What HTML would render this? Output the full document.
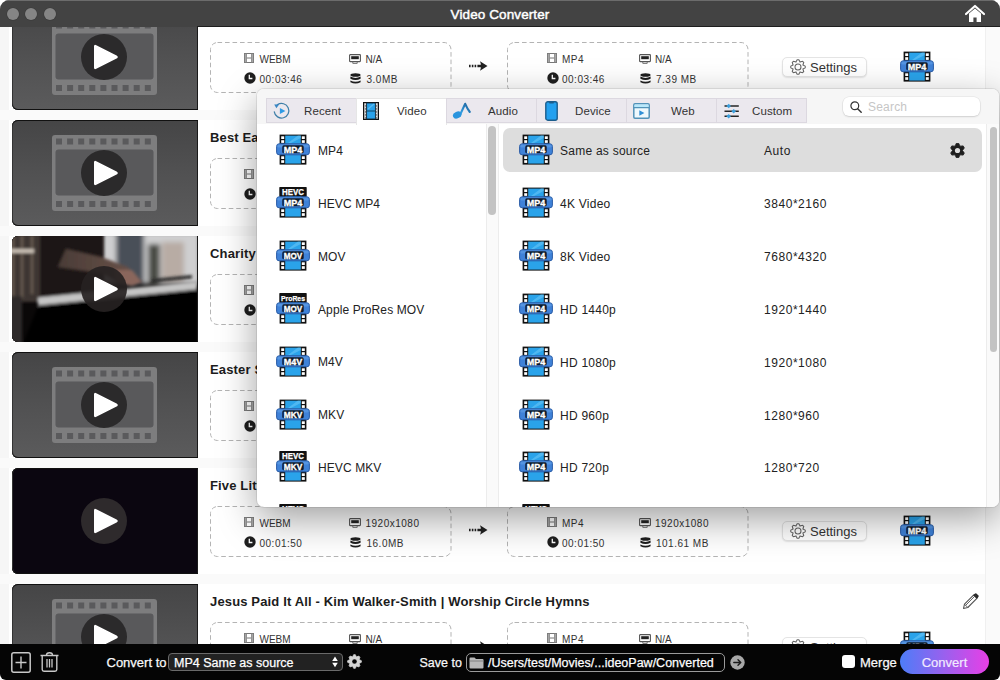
<!DOCTYPE html>
<html><head><meta charset="utf-8">
<style>
*{box-sizing:border-box;margin:0;padding:0}
html,body{width:1000px;height:680px;overflow:hidden;background:#fff;font-family:"Liberation Sans",sans-serif}
.win{position:absolute;left:0;top:0;width:1000px;height:680px;border-radius:9px 9px 6px 6px;overflow:hidden;background:#fff}
.tx{position:absolute;white-space:nowrap;line-height:1.16;font-family:"Liberation Sans",sans-serif}
.title{position:absolute;left:0;top:0;width:1000px;height:27px;background:#434343;box-shadow:inset 0 1px 0 #6c6c6c;z-index:5}
.dot{position:absolute;top:7.5px;width:12px;height:12px;border-radius:50%;background:#858585;box-shadow:0 0 0 0.6px #3a3a3a}
.list{position:absolute;left:0;top:0;width:1000px;height:680px;overflow:hidden}
.sep{position:absolute;left:0;width:1000px;height:10px;background:#fafafa}
.thumb{position:absolute;left:12px;width:185.5px;height:106px;border-radius:6px 0 0 6px;overflow:hidden;box-shadow:inset 0 1px 0 #111,inset 0 -1px 0 #111,inset -1px 0 0 #1a1a1a,inset 1px 0 0 #333}
.box{position:absolute;height:51px;border:1px dashed #a9a9a9;border-radius:7px}
.btn{position:absolute;left:782px;width:85px;height:20px;border-radius:5px;background:#fff;border:1px solid #e4e4e4;box-shadow:0 1px 1.5px rgba(0,0,0,.10)}
.vtrack{position:absolute;left:985px;top:27px;width:15px;height:618px;background:#fafafa;border-left:1px solid #f0f0f0}
.pop{position:absolute;left:257px;top:89px;width:742px;height:418px;border-radius:7px;background:#fff;box-shadow:0 0 0 1px rgba(0,0,0,.08),0 12px 38px rgba(0,0,0,.38);overflow:hidden;z-index:3}
.phead{position:absolute;left:0;top:0;width:742px;height:35px;background:#f6f6f6}
.tab{position:absolute;top:9px;width:91px;height:25px;background:#ebe8ee;border:1px solid #dcd8e0}
.tab.sel{background:#fff;height:27px;border-bottom:none;border-color:#e6e6e6}
.bottom{position:absolute;left:0;top:644px;width:1000px;height:36px;background:#050505;z-index:5}
.search{position:absolute;width:137px;height:19px;background:#fff;border-radius:6px;box-shadow:0 0 0 0.5px rgba(0,0,0,.08),0 1px 2px rgba(0,0,0,.12)}
.ltrack{position:absolute;width:13px;background:#fafafa;border-left:1px solid #ececec;border-right:1px solid #ececec}
.rtrack{position:absolute;width:13px;background:#fafafa;border-left:1px solid #ececec}
.thumbbar{position:absolute;width:8px;background:#c3c3c3;border-radius:4px}
.selrow{position:absolute;background:#dddddd;border-radius:7px}
.dd{position:absolute;border:1px solid #6a6a6a;border-radius:4px;background:#222}
.chk{position:absolute;width:13px;height:13px;border-radius:3px;background:#fff}
.conv{position:absolute;width:89px;height:25px;border-radius:12.5px;background:linear-gradient(90deg,#4d7df8 0%,#9a60ee 50%,#e83fe6 100%);color:#f4eaff;font-size:13px;text-align:center;line-height:25px;font-family:"Liberation Sans",sans-serif}
.lmargin{position:absolute;left:0;top:27px;width:9px;height:618px;background:#f6f6f6}

</style></head><body>
<div class="win">
<div class="list">
<div class="lmargin"></div>
<div class="sep" style="top:110px"></div>
<div class="thumb" style="top:4px;background:linear-gradient(180deg,#454546 0%,#515152 50%,#5b5b5c 100%)"><svg width="185" height="106" viewBox="0 0 185 106" style="position:absolute;left:0;top:0"><rect x="40" y="15" width="105" height="76" rx="3" fill="#7d7d7e"/><rect x="44.0" y="18.5" width="6" height="6" fill="#5a5a5c"/><rect x="44.0" y="81" width="6" height="6" fill="#5a5a5c"/><rect x="55.1" y="18.5" width="6" height="6" fill="#5a5a5c"/><rect x="55.1" y="81" width="6" height="6" fill="#5a5a5c"/><rect x="66.2" y="18.5" width="6" height="6" fill="#5a5a5c"/><rect x="66.2" y="81" width="6" height="6" fill="#5a5a5c"/><rect x="77.3" y="18.5" width="6" height="6" fill="#5a5a5c"/><rect x="77.3" y="81" width="6" height="6" fill="#5a5a5c"/><rect x="88.4" y="18.5" width="6" height="6" fill="#5a5a5c"/><rect x="88.4" y="81" width="6" height="6" fill="#5a5a5c"/><rect x="99.5" y="18.5" width="6" height="6" fill="#5a5a5c"/><rect x="99.5" y="81" width="6" height="6" fill="#5a5a5c"/><rect x="110.6" y="18.5" width="6" height="6" fill="#5a5a5c"/><rect x="110.6" y="81" width="6" height="6" fill="#5a5a5c"/><rect x="121.7" y="18.5" width="6" height="6" fill="#5a5a5c"/><rect x="121.7" y="81" width="6" height="6" fill="#5a5a5c"/><rect x="132.8" y="18.5" width="6" height="6" fill="#5a5a5c"/><rect x="132.8" y="81" width="6" height="6" fill="#5a5a5c"/><rect x="43.5" y="29.5" width="98" height="46" rx="3" fill="#59595b"/></svg><svg width="50" height="50" viewBox="0 0 50 50" style="position:absolute;left:67px;top:28px"><circle cx="25" cy="25" r="23" fill="#2b2a2b"/><path d="M17.3 13.2 Q15 11.9 15 14.5 V35.5 Q15 38.1 17.3 36.8 L37.6 26.6 Q40 25 37.6 23.4 Z" fill="#fff"/></svg></div>
<svg width="242" height="52" style="position:absolute;left:210px;top:42px"><rect x="0.5" y="0.5" width="240.5" height="50" rx="7" fill="none" stroke="#b4b4b4" stroke-width="1" stroke-dasharray="4.6 2.9"/></svg>
<svg width="242" height="52" style="position:absolute;left:507px;top:42px"><rect x="0.5" y="0.5" width="240.5" height="50" rx="7" fill="none" stroke="#b4b4b4" stroke-width="1" stroke-dasharray="4.6 2.9"/></svg>
<div style="position:absolute;left:244px;top:53.2px;"><svg width="10" height="10" viewBox="0 0 10 10" style="display:block"><rect x="0.5" y="0.5" width="9" height="9" fill="none" stroke="#777" stroke-width="1"/><rect x="0.5" y="0.5" width="2.4" height="9" fill="#888"/><rect x="7.1" y="0.5" width="2.4" height="9" fill="#888"/><path d="M1.5 1 V9 M8.5 1 V9" stroke="#bbb" stroke-width=".6"/><line x1="2.9" y1="5" x2="7.1" y2="5" stroke="#777" stroke-width="1"/></svg></div>
<div class="tx" style="left:259.5px;top:54.44px;font-size:10px;color:#333;font-weight:normal;">WEBM</div>
<div style="position:absolute;left:244px;top:71.6px;"><svg width="12" height="12" viewBox="0 0 12 12" style="display:block"><circle cx="6" cy="6" r="5.7" fill="#1e1e1e"/><path d="M5.3 2.8 V6.5 H8.4" fill="none" stroke="#fff" stroke-width="1.3"/></svg></div>
<div class="tx" style="left:259.5px;top:73.73px;font-size:10px;color:#333;font-weight:normal;letter-spacing:0.5px">00:03:46</div>
<div style="position:absolute;left:349px;top:53.8px;"><svg width="12" height="10" viewBox="0 0 12 10" style="display:block"><rect x="0.6" y="0.6" width="10.8" height="7" rx="0.6" fill="none" stroke="#555" stroke-width="1.1"/><rect x="2.2" y="2.2" width="7.6" height="3" fill="#222"/><path d="M3.8 7.6 V9.4 H8.2 V7.6" fill="none" stroke="#666" stroke-width="0.9"/></svg></div>
<div class="tx" style="left:365.5px;top:54.44px;font-size:10px;color:#333;font-weight:normal;">N/A</div>
<div style="position:absolute;left:349.5px;top:72.8px;"><svg width="11" height="11" viewBox="0 0 11 11" style="display:block"><ellipse cx="5.5" cy="2" rx="5.1" ry="1.8" fill="#1e1e1e"/><path d="M0.4 3.6 Q5.5 6.2 10.6 3.6 V5.8 Q5.5 8.4 0.4 5.8 Z" fill="#1e1e1e"/><path d="M0.4 7.4 Q5.5 10 10.6 7.4 V9.2 Q5.5 11.8 0.4 9.2 Z" fill="#1e1e1e"/></svg></div>
<div class="tx" style="left:366.5px;top:73.73px;font-size:10px;color:#333;font-weight:normal;letter-spacing:0.5px">3.0MB</div>
<div style="position:absolute;left:546.5px;top:53.2px;"><svg width="10" height="10" viewBox="0 0 10 10" style="display:block"><rect x="0.5" y="0.5" width="9" height="9" fill="none" stroke="#777" stroke-width="1"/><rect x="0.5" y="0.5" width="2.4" height="9" fill="#888"/><rect x="7.1" y="0.5" width="2.4" height="9" fill="#888"/><path d="M1.5 1 V9 M8.5 1 V9" stroke="#bbb" stroke-width=".6"/><line x1="2.9" y1="5" x2="7.1" y2="5" stroke="#777" stroke-width="1"/></svg></div>
<div class="tx" style="left:562px;top:54.44px;font-size:10px;color:#333;font-weight:normal;letter-spacing:0.5px">MP4</div>
<div style="position:absolute;left:546.5px;top:71.6px;"><svg width="12" height="12" viewBox="0 0 12 12" style="display:block"><circle cx="6" cy="6" r="5.7" fill="#1e1e1e"/><path d="M5.3 2.8 V6.5 H8.4" fill="none" stroke="#fff" stroke-width="1.3"/></svg></div>
<div class="tx" style="left:562px;top:73.73px;font-size:10px;color:#333;font-weight:normal;letter-spacing:0.5px">00:03:46</div>
<div style="position:absolute;left:639px;top:53.8px;"><svg width="12" height="10" viewBox="0 0 12 10" style="display:block"><rect x="0.6" y="0.6" width="10.8" height="7" rx="0.6" fill="none" stroke="#555" stroke-width="1.1"/><rect x="2.2" y="2.2" width="7.6" height="3" fill="#222"/><path d="M3.8 7.6 V9.4 H8.2 V7.6" fill="none" stroke="#666" stroke-width="0.9"/></svg></div>
<div class="tx" style="left:655px;top:54.44px;font-size:10px;color:#333;font-weight:normal;">N/A</div>
<div style="position:absolute;left:639.5px;top:72.8px;"><svg width="11" height="11" viewBox="0 0 11 11" style="display:block"><ellipse cx="5.5" cy="2" rx="5.1" ry="1.8" fill="#1e1e1e"/><path d="M0.4 3.6 Q5.5 6.2 10.6 3.6 V5.8 Q5.5 8.4 0.4 5.8 Z" fill="#1e1e1e"/><path d="M0.4 7.4 Q5.5 10 10.6 7.4 V9.2 Q5.5 11.8 0.4 9.2 Z" fill="#1e1e1e"/></svg></div>
<div class="tx" style="left:656px;top:73.73px;font-size:10px;color:#333;font-weight:normal;letter-spacing:0.5px">7.39 MB</div>
<div style="position:absolute;left:469px;top:60px;"><svg width="20" height="12" viewBox="0 0 20 12" style="display:block"><path d="M0 6 H12" stroke="#222" stroke-width="2.4" stroke-dasharray="1.6 1.2"/><path d="M11 1.2 L18.5 6 L11 10.8 L12.5 6 Z" fill="#222"/><path d="M10 6 H15" stroke="#222" stroke-width="2.4"/></svg></div>
<div class="btn" style="top:57px"><div style="position:absolute;left:6.8px;top:0.9px;"><svg width="16" height="16" viewBox="0 0 16 16" style="display:block"><path d="M7.13 0.75 L8.87 0.75 L10.03 3.10 L12.51 2.26 L13.74 3.49 L12.90 5.97 L15.25 7.13 L15.25 8.87 L12.90 10.03 L13.74 12.51 L12.51 13.74 L10.03 12.90 L8.87 15.25 L7.13 15.25 L5.97 12.90 L3.49 13.74 L2.26 12.51 L3.10 10.03 L0.75 8.87 L0.75 7.13 L3.10 5.97 L2.26 3.49 L3.49 2.26 L5.97 3.10 Z" fill="none" stroke="#666" stroke-width="1.05" stroke-linejoin="round"/><circle cx="8" cy="8" r="3" fill="none" stroke="#666" stroke-width="1.05"/></svg></div><div class="tx" style="left:27px;top:1.96px;font-size:13px;color:#333;font-weight:normal;">Settings</div></div>
<div style="position:absolute;left:900px;top:51px;"><svg width="34" height="32" viewBox="0 0 34 32" style="display:block"><rect x="3.6" y="0.6" width="26.8" height="30" fill="#111"/><rect x="9.2" y="1.6" width="15.6" height="28" fill="#2aa3ea"/><path d="M12 9 L22 1.6 L24.8 1.6 L24.8 4 L15 9 Z" fill="#7cd0fa" opacity=".45"/><rect x="5.2" y="2.3" width="3" height="2.7" fill="#fff"/><rect x="25.8" y="2.3" width="3" height="2.7" fill="#fff"/><rect x="5.2" y="6.2" width="3" height="2.7" fill="#fff"/><rect x="25.8" y="6.2" width="3" height="2.7" fill="#fff"/><rect x="5.2" y="22.3" width="3" height="2.7" fill="#fff"/><rect x="25.8" y="22.3" width="3" height="2.7" fill="#fff"/><rect x="5.2" y="26.2" width="3" height="2.7" fill="#fff"/><rect x="25.8" y="26.2" width="3" height="2.7" fill="#fff"/><rect x="0.6" y="9.8" width="32.8" height="11" rx="2.6" fill="#3f82d8" stroke="#2a5ca6" stroke-width="1"/><rect x="1.4" y="10.5" width="31.2" height="3" rx="1.2" fill="#6aa6ea" opacity=".5"/><rect x="6.3" y="11.3" width="21.4" height="8" rx="1.6" fill="#0d1a2a"/><text x="17" y="18.6" text-anchor="middle" font-family="Liberation Sans" font-weight="bold" font-size="9.4" fill="#fff" stroke="#fff" stroke-width="0.35" textLength="18.5" lengthAdjust="spacingAndGlyphs">MP4</text></svg></div>
<div class="sep" style="top:226px"></div>
<div class="thumb" style="top:120px;background:linear-gradient(180deg,#454546 0%,#515152 50%,#5b5b5c 100%)"><svg width="185" height="106" viewBox="0 0 185 106" style="position:absolute;left:0;top:0"><rect x="40" y="15" width="105" height="76" rx="3" fill="#7d7d7e"/><rect x="44.0" y="18.5" width="6" height="6" fill="#5a5a5c"/><rect x="44.0" y="81" width="6" height="6" fill="#5a5a5c"/><rect x="55.1" y="18.5" width="6" height="6" fill="#5a5a5c"/><rect x="55.1" y="81" width="6" height="6" fill="#5a5a5c"/><rect x="66.2" y="18.5" width="6" height="6" fill="#5a5a5c"/><rect x="66.2" y="81" width="6" height="6" fill="#5a5a5c"/><rect x="77.3" y="18.5" width="6" height="6" fill="#5a5a5c"/><rect x="77.3" y="81" width="6" height="6" fill="#5a5a5c"/><rect x="88.4" y="18.5" width="6" height="6" fill="#5a5a5c"/><rect x="88.4" y="81" width="6" height="6" fill="#5a5a5c"/><rect x="99.5" y="18.5" width="6" height="6" fill="#5a5a5c"/><rect x="99.5" y="81" width="6" height="6" fill="#5a5a5c"/><rect x="110.6" y="18.5" width="6" height="6" fill="#5a5a5c"/><rect x="110.6" y="81" width="6" height="6" fill="#5a5a5c"/><rect x="121.7" y="18.5" width="6" height="6" fill="#5a5a5c"/><rect x="121.7" y="81" width="6" height="6" fill="#5a5a5c"/><rect x="132.8" y="18.5" width="6" height="6" fill="#5a5a5c"/><rect x="132.8" y="81" width="6" height="6" fill="#5a5a5c"/><rect x="43.5" y="29.5" width="98" height="46" rx="3" fill="#59595b"/></svg><svg width="50" height="50" viewBox="0 0 50 50" style="position:absolute;left:67px;top:28px"><circle cx="25" cy="25" r="23" fill="#2b2a2b"/><path d="M17.3 13.2 Q15 11.9 15 14.5 V35.5 Q15 38.1 17.3 36.8 L37.6 26.6 Q40 25 37.6 23.4 Z" fill="#fff"/></svg></div>
<div class="tx" style="left:210px;top:129.96px;font-size:13px;color:#1c1c1c;font-weight:bold;letter-spacing:0.15px">Best Easter Songs 2021</div>
<svg width="242" height="52" style="position:absolute;left:210px;top:158px"><rect x="0.5" y="0.5" width="240.5" height="50" rx="7" fill="none" stroke="#b4b4b4" stroke-width="1" stroke-dasharray="4.6 2.9"/></svg>
<svg width="242" height="52" style="position:absolute;left:507px;top:158px"><rect x="0.5" y="0.5" width="240.5" height="50" rx="7" fill="none" stroke="#b4b4b4" stroke-width="1" stroke-dasharray="4.6 2.9"/></svg>
<div style="position:absolute;left:244px;top:169.2px;"><svg width="10" height="10" viewBox="0 0 10 10" style="display:block"><rect x="0.5" y="0.5" width="9" height="9" fill="none" stroke="#777" stroke-width="1"/><rect x="0.5" y="0.5" width="2.4" height="9" fill="#888"/><rect x="7.1" y="0.5" width="2.4" height="9" fill="#888"/><path d="M1.5 1 V9 M8.5 1 V9" stroke="#bbb" stroke-width=".6"/><line x1="2.9" y1="5" x2="7.1" y2="5" stroke="#777" stroke-width="1"/></svg></div>
<div class="tx" style="left:259.5px;top:170.44px;font-size:10px;color:#333;font-weight:normal;">WEBM</div>
<div style="position:absolute;left:244px;top:187.6px;"><svg width="12" height="12" viewBox="0 0 12 12" style="display:block"><circle cx="6" cy="6" r="5.7" fill="#1e1e1e"/><path d="M5.3 2.8 V6.5 H8.4" fill="none" stroke="#fff" stroke-width="1.3"/></svg></div>
<div class="tx" style="left:259.5px;top:189.74px;font-size:10px;color:#333;font-weight:normal;letter-spacing:0.5px">00:04:10</div>
<div style="position:absolute;left:349px;top:169.8px;"><svg width="12" height="10" viewBox="0 0 12 10" style="display:block"><rect x="0.6" y="0.6" width="10.8" height="7" rx="0.6" fill="none" stroke="#555" stroke-width="1.1"/><rect x="2.2" y="2.2" width="7.6" height="3" fill="#222"/><path d="M3.8 7.6 V9.4 H8.2 V7.6" fill="none" stroke="#666" stroke-width="0.9"/></svg></div>
<div class="tx" style="left:365.5px;top:170.44px;font-size:10px;color:#333;font-weight:normal;">N/A</div>
<div style="position:absolute;left:349.5px;top:188.8px;"><svg width="11" height="11" viewBox="0 0 11 11" style="display:block"><ellipse cx="5.5" cy="2" rx="5.1" ry="1.8" fill="#1e1e1e"/><path d="M0.4 3.6 Q5.5 6.2 10.6 3.6 V5.8 Q5.5 8.4 0.4 5.8 Z" fill="#1e1e1e"/><path d="M0.4 7.4 Q5.5 10 10.6 7.4 V9.2 Q5.5 11.8 0.4 9.2 Z" fill="#1e1e1e"/></svg></div>
<div class="tx" style="left:366.5px;top:189.74px;font-size:10px;color:#333;font-weight:normal;letter-spacing:0.5px">3.1MB</div>
<div style="position:absolute;left:546.5px;top:169.2px;"><svg width="10" height="10" viewBox="0 0 10 10" style="display:block"><rect x="0.5" y="0.5" width="9" height="9" fill="none" stroke="#777" stroke-width="1"/><rect x="0.5" y="0.5" width="2.4" height="9" fill="#888"/><rect x="7.1" y="0.5" width="2.4" height="9" fill="#888"/><path d="M1.5 1 V9 M8.5 1 V9" stroke="#bbb" stroke-width=".6"/><line x1="2.9" y1="5" x2="7.1" y2="5" stroke="#777" stroke-width="1"/></svg></div>
<div class="tx" style="left:562px;top:170.44px;font-size:10px;color:#333;font-weight:normal;letter-spacing:0.5px">MP4</div>
<div style="position:absolute;left:546.5px;top:187.6px;"><svg width="12" height="12" viewBox="0 0 12 12" style="display:block"><circle cx="6" cy="6" r="5.7" fill="#1e1e1e"/><path d="M5.3 2.8 V6.5 H8.4" fill="none" stroke="#fff" stroke-width="1.3"/></svg></div>
<div class="tx" style="left:562px;top:189.74px;font-size:10px;color:#333;font-weight:normal;letter-spacing:0.5px">00:04:10</div>
<div style="position:absolute;left:639px;top:169.8px;"><svg width="12" height="10" viewBox="0 0 12 10" style="display:block"><rect x="0.6" y="0.6" width="10.8" height="7" rx="0.6" fill="none" stroke="#555" stroke-width="1.1"/><rect x="2.2" y="2.2" width="7.6" height="3" fill="#222"/><path d="M3.8 7.6 V9.4 H8.2 V7.6" fill="none" stroke="#666" stroke-width="0.9"/></svg></div>
<div class="tx" style="left:655px;top:170.44px;font-size:10px;color:#333;font-weight:normal;">N/A</div>
<div style="position:absolute;left:639.5px;top:188.8px;"><svg width="11" height="11" viewBox="0 0 11 11" style="display:block"><ellipse cx="5.5" cy="2" rx="5.1" ry="1.8" fill="#1e1e1e"/><path d="M0.4 3.6 Q5.5 6.2 10.6 3.6 V5.8 Q5.5 8.4 0.4 5.8 Z" fill="#1e1e1e"/><path d="M0.4 7.4 Q5.5 10 10.6 7.4 V9.2 Q5.5 11.8 0.4 9.2 Z" fill="#1e1e1e"/></svg></div>
<div class="tx" style="left:656px;top:189.74px;font-size:10px;color:#333;font-weight:normal;letter-spacing:0.5px">7.39 MB</div>
<div style="position:absolute;left:469px;top:176px;"><svg width="20" height="12" viewBox="0 0 20 12" style="display:block"><path d="M0 6 H12" stroke="#222" stroke-width="2.4" stroke-dasharray="1.6 1.2"/><path d="M11 1.2 L18.5 6 L11 10.8 L12.5 6 Z" fill="#222"/><path d="M10 6 H15" stroke="#222" stroke-width="2.4"/></svg></div>
<div class="btn" style="top:173px"><div style="position:absolute;left:6.8px;top:0.9px;"><svg width="16" height="16" viewBox="0 0 16 16" style="display:block"><path d="M7.13 0.75 L8.87 0.75 L10.03 3.10 L12.51 2.26 L13.74 3.49 L12.90 5.97 L15.25 7.13 L15.25 8.87 L12.90 10.03 L13.74 12.51 L12.51 13.74 L10.03 12.90 L8.87 15.25 L7.13 15.25 L5.97 12.90 L3.49 13.74 L2.26 12.51 L3.10 10.03 L0.75 8.87 L0.75 7.13 L3.10 5.97 L2.26 3.49 L3.49 2.26 L5.97 3.10 Z" fill="none" stroke="#666" stroke-width="1.05" stroke-linejoin="round"/><circle cx="8" cy="8" r="3" fill="none" stroke="#666" stroke-width="1.05"/></svg></div><div class="tx" style="left:27px;top:1.96px;font-size:13px;color:#333;font-weight:normal;">Settings</div></div>
<div style="position:absolute;left:900px;top:167px;"><svg width="34" height="32" viewBox="0 0 34 32" style="display:block"><rect x="3.6" y="0.6" width="26.8" height="30" fill="#111"/><rect x="9.2" y="1.6" width="15.6" height="28" fill="#2aa3ea"/><path d="M12 9 L22 1.6 L24.8 1.6 L24.8 4 L15 9 Z" fill="#7cd0fa" opacity=".45"/><rect x="5.2" y="2.3" width="3" height="2.7" fill="#fff"/><rect x="25.8" y="2.3" width="3" height="2.7" fill="#fff"/><rect x="5.2" y="6.2" width="3" height="2.7" fill="#fff"/><rect x="25.8" y="6.2" width="3" height="2.7" fill="#fff"/><rect x="5.2" y="22.3" width="3" height="2.7" fill="#fff"/><rect x="25.8" y="22.3" width="3" height="2.7" fill="#fff"/><rect x="5.2" y="26.2" width="3" height="2.7" fill="#fff"/><rect x="25.8" y="26.2" width="3" height="2.7" fill="#fff"/><rect x="0.6" y="9.8" width="32.8" height="11" rx="2.6" fill="#3f82d8" stroke="#2a5ca6" stroke-width="1"/><rect x="1.4" y="10.5" width="31.2" height="3" rx="1.2" fill="#6aa6ea" opacity=".5"/><rect x="6.3" y="11.3" width="21.4" height="8" rx="1.6" fill="#0d1a2a"/><text x="17" y="18.6" text-anchor="middle" font-family="Liberation Sans" font-weight="bold" font-size="9.4" fill="#fff" stroke="#fff" stroke-width="0.35" textLength="18.5" lengthAdjust="spacingAndGlyphs">MP4</text></svg></div>
<div class="sep" style="top:342px"></div>
<div class="thumb" style="top:236px;background:#1a1614"><svg width="185" height="106" viewBox="0 0 185 106" style="position:absolute;left:0;top:0"><defs><filter id="bl" x="-10%" y="-10%" width="120%" height="120%"><feGaussianBlur stdDeviation="1.6"/></filter><filter id="bl2" x="-10%" y="-10%" width="120%" height="120%"><feGaussianBlur stdDeviation="2.5"/></filter><linearGradient id="arm" x1="0" y1="0" x2="1" y2="0"><stop offset="0" stop-color="#4a3c37"/><stop offset="1" stop-color="#6a5249"/></linearGradient></defs><rect width="185" height="106" fill="#0a0808"/><g filter="url(#bl2)"><rect x="88" y="-4" width="100" height="52" fill="#cfcfd0"/><rect x="104" y="-4" width="28" height="52" fill="#4a5058"/><rect x="136" y="8" width="12" height="40" fill="#4a4c44"/><rect x="150" y="6" width="22" height="40" fill="#b8aca4"/></g><g filter="url(#bl)"><rect x="-4" y="-4" width="34" height="70" fill="#3e3430"/><rect x="28" y="-4" width="64" height="66" fill="#1b1817"/><path d="M1 0 V60 M10 0 V62 M20 0 V58" stroke="#7a6a60" stroke-width="1.6"/><rect x="-2" y="13" width="24" height="4" fill="#c8beb4"/><path d="M54 13 L92 22 L116 31 L126 44 L112 49 L90 37 L46 31 Z" fill="url(#arm)"/><path d="M102 34 L120 34 L130 46 L120 50 L104 46 Z" fill="#8a665c"/><path d="M26 61.5 L185 45.5 L185 53.5 L26 69.5 Z" fill="#c4c4c4"/><path d="M140 43 L180 39 L180 42.5 L140 46.5 Z" fill="#2a2a2a"/><rect x="-4" y="60" width="14" height="50" fill="#2e2c2c"/><path d="M26 70 L185 54 L185 110 L10 110 Z" fill="#060505"/></g></svg><svg width="50" height="50" viewBox="0 0 50 50" style="position:absolute;left:67px;top:28px"><circle cx="25" cy="25" r="23" fill="rgba(38,34,34,0.92)"/><path d="M17.3 13.2 Q15 11.9 15 14.5 V35.5 Q15 38.1 17.3 36.8 L37.6 26.6 Q40 25 37.6 23.4 Z" fill="#fff"/></svg></div>
<div class="tx" style="left:210px;top:245.96px;font-size:13px;color:#1c1c1c;font-weight:bold;letter-spacing:0.15px">Charity Gayle - Living Hope</div>
<svg width="242" height="52" style="position:absolute;left:210px;top:274px"><rect x="0.5" y="0.5" width="240.5" height="50" rx="7" fill="none" stroke="#b4b4b4" stroke-width="1" stroke-dasharray="4.6 2.9"/></svg>
<svg width="242" height="52" style="position:absolute;left:507px;top:274px"><rect x="0.5" y="0.5" width="240.5" height="50" rx="7" fill="none" stroke="#b4b4b4" stroke-width="1" stroke-dasharray="4.6 2.9"/></svg>
<div style="position:absolute;left:244px;top:285.2px;"><svg width="10" height="10" viewBox="0 0 10 10" style="display:block"><rect x="0.5" y="0.5" width="9" height="9" fill="none" stroke="#777" stroke-width="1"/><rect x="0.5" y="0.5" width="2.4" height="9" fill="#888"/><rect x="7.1" y="0.5" width="2.4" height="9" fill="#888"/><path d="M1.5 1 V9 M8.5 1 V9" stroke="#bbb" stroke-width=".6"/><line x1="2.9" y1="5" x2="7.1" y2="5" stroke="#777" stroke-width="1"/></svg></div>
<div class="tx" style="left:259.5px;top:286.44px;font-size:10px;color:#333;font-weight:normal;">WEBM</div>
<div style="position:absolute;left:244px;top:303.6px;"><svg width="12" height="12" viewBox="0 0 12 12" style="display:block"><circle cx="6" cy="6" r="5.7" fill="#1e1e1e"/><path d="M5.3 2.8 V6.5 H8.4" fill="none" stroke="#fff" stroke-width="1.3"/></svg></div>
<div class="tx" style="left:259.5px;top:305.74px;font-size:10px;color:#333;font-weight:normal;letter-spacing:0.5px">00:05:00</div>
<div style="position:absolute;left:349px;top:285.8px;"><svg width="12" height="10" viewBox="0 0 12 10" style="display:block"><rect x="0.6" y="0.6" width="10.8" height="7" rx="0.6" fill="none" stroke="#555" stroke-width="1.1"/><rect x="2.2" y="2.2" width="7.6" height="3" fill="#222"/><path d="M3.8 7.6 V9.4 H8.2 V7.6" fill="none" stroke="#666" stroke-width="0.9"/></svg></div>
<div class="tx" style="left:365.5px;top:286.44px;font-size:10px;color:#333;font-weight:normal;">N/A</div>
<div style="position:absolute;left:349.5px;top:304.8px;"><svg width="11" height="11" viewBox="0 0 11 11" style="display:block"><ellipse cx="5.5" cy="2" rx="5.1" ry="1.8" fill="#1e1e1e"/><path d="M0.4 3.6 Q5.5 6.2 10.6 3.6 V5.8 Q5.5 8.4 0.4 5.8 Z" fill="#1e1e1e"/><path d="M0.4 7.4 Q5.5 10 10.6 7.4 V9.2 Q5.5 11.8 0.4 9.2 Z" fill="#1e1e1e"/></svg></div>
<div class="tx" style="left:366.5px;top:305.74px;font-size:10px;color:#333;font-weight:normal;letter-spacing:0.5px">3.2MB</div>
<div style="position:absolute;left:546.5px;top:285.2px;"><svg width="10" height="10" viewBox="0 0 10 10" style="display:block"><rect x="0.5" y="0.5" width="9" height="9" fill="none" stroke="#777" stroke-width="1"/><rect x="0.5" y="0.5" width="2.4" height="9" fill="#888"/><rect x="7.1" y="0.5" width="2.4" height="9" fill="#888"/><path d="M1.5 1 V9 M8.5 1 V9" stroke="#bbb" stroke-width=".6"/><line x1="2.9" y1="5" x2="7.1" y2="5" stroke="#777" stroke-width="1"/></svg></div>
<div class="tx" style="left:562px;top:286.44px;font-size:10px;color:#333;font-weight:normal;letter-spacing:0.5px">MP4</div>
<div style="position:absolute;left:546.5px;top:303.6px;"><svg width="12" height="12" viewBox="0 0 12 12" style="display:block"><circle cx="6" cy="6" r="5.7" fill="#1e1e1e"/><path d="M5.3 2.8 V6.5 H8.4" fill="none" stroke="#fff" stroke-width="1.3"/></svg></div>
<div class="tx" style="left:562px;top:305.74px;font-size:10px;color:#333;font-weight:normal;letter-spacing:0.5px">00:05:00</div>
<div style="position:absolute;left:639px;top:285.8px;"><svg width="12" height="10" viewBox="0 0 12 10" style="display:block"><rect x="0.6" y="0.6" width="10.8" height="7" rx="0.6" fill="none" stroke="#555" stroke-width="1.1"/><rect x="2.2" y="2.2" width="7.6" height="3" fill="#222"/><path d="M3.8 7.6 V9.4 H8.2 V7.6" fill="none" stroke="#666" stroke-width="0.9"/></svg></div>
<div class="tx" style="left:655px;top:286.44px;font-size:10px;color:#333;font-weight:normal;">N/A</div>
<div style="position:absolute;left:639.5px;top:304.8px;"><svg width="11" height="11" viewBox="0 0 11 11" style="display:block"><ellipse cx="5.5" cy="2" rx="5.1" ry="1.8" fill="#1e1e1e"/><path d="M0.4 3.6 Q5.5 6.2 10.6 3.6 V5.8 Q5.5 8.4 0.4 5.8 Z" fill="#1e1e1e"/><path d="M0.4 7.4 Q5.5 10 10.6 7.4 V9.2 Q5.5 11.8 0.4 9.2 Z" fill="#1e1e1e"/></svg></div>
<div class="tx" style="left:656px;top:305.74px;font-size:10px;color:#333;font-weight:normal;letter-spacing:0.5px">7.39 MB</div>
<div style="position:absolute;left:469px;top:292px;"><svg width="20" height="12" viewBox="0 0 20 12" style="display:block"><path d="M0 6 H12" stroke="#222" stroke-width="2.4" stroke-dasharray="1.6 1.2"/><path d="M11 1.2 L18.5 6 L11 10.8 L12.5 6 Z" fill="#222"/><path d="M10 6 H15" stroke="#222" stroke-width="2.4"/></svg></div>
<div class="btn" style="top:289px"><div style="position:absolute;left:6.8px;top:0.9px;"><svg width="16" height="16" viewBox="0 0 16 16" style="display:block"><path d="M7.13 0.75 L8.87 0.75 L10.03 3.10 L12.51 2.26 L13.74 3.49 L12.90 5.97 L15.25 7.13 L15.25 8.87 L12.90 10.03 L13.74 12.51 L12.51 13.74 L10.03 12.90 L8.87 15.25 L7.13 15.25 L5.97 12.90 L3.49 13.74 L2.26 12.51 L3.10 10.03 L0.75 8.87 L0.75 7.13 L3.10 5.97 L2.26 3.49 L3.49 2.26 L5.97 3.10 Z" fill="none" stroke="#666" stroke-width="1.05" stroke-linejoin="round"/><circle cx="8" cy="8" r="3" fill="none" stroke="#666" stroke-width="1.05"/></svg></div><div class="tx" style="left:27px;top:1.96px;font-size:13px;color:#333;font-weight:normal;">Settings</div></div>
<div style="position:absolute;left:900px;top:283px;"><svg width="34" height="32" viewBox="0 0 34 32" style="display:block"><rect x="3.6" y="0.6" width="26.8" height="30" fill="#111"/><rect x="9.2" y="1.6" width="15.6" height="28" fill="#2aa3ea"/><path d="M12 9 L22 1.6 L24.8 1.6 L24.8 4 L15 9 Z" fill="#7cd0fa" opacity=".45"/><rect x="5.2" y="2.3" width="3" height="2.7" fill="#fff"/><rect x="25.8" y="2.3" width="3" height="2.7" fill="#fff"/><rect x="5.2" y="6.2" width="3" height="2.7" fill="#fff"/><rect x="25.8" y="6.2" width="3" height="2.7" fill="#fff"/><rect x="5.2" y="22.3" width="3" height="2.7" fill="#fff"/><rect x="25.8" y="22.3" width="3" height="2.7" fill="#fff"/><rect x="5.2" y="26.2" width="3" height="2.7" fill="#fff"/><rect x="25.8" y="26.2" width="3" height="2.7" fill="#fff"/><rect x="0.6" y="9.8" width="32.8" height="11" rx="2.6" fill="#3f82d8" stroke="#2a5ca6" stroke-width="1"/><rect x="1.4" y="10.5" width="31.2" height="3" rx="1.2" fill="#6aa6ea" opacity=".5"/><rect x="6.3" y="11.3" width="21.4" height="8" rx="1.6" fill="#0d1a2a"/><text x="17" y="18.6" text-anchor="middle" font-family="Liberation Sans" font-weight="bold" font-size="9.4" fill="#fff" stroke="#fff" stroke-width="0.35" textLength="18.5" lengthAdjust="spacingAndGlyphs">MP4</text></svg></div>
<div class="sep" style="top:458px"></div>
<div class="thumb" style="top:352px;background:linear-gradient(180deg,#454546 0%,#515152 50%,#5b5b5c 100%)"><svg width="185" height="106" viewBox="0 0 185 106" style="position:absolute;left:0;top:0"><rect x="40" y="15" width="105" height="76" rx="3" fill="#7d7d7e"/><rect x="44.0" y="18.5" width="6" height="6" fill="#5a5a5c"/><rect x="44.0" y="81" width="6" height="6" fill="#5a5a5c"/><rect x="55.1" y="18.5" width="6" height="6" fill="#5a5a5c"/><rect x="55.1" y="81" width="6" height="6" fill="#5a5a5c"/><rect x="66.2" y="18.5" width="6" height="6" fill="#5a5a5c"/><rect x="66.2" y="81" width="6" height="6" fill="#5a5a5c"/><rect x="77.3" y="18.5" width="6" height="6" fill="#5a5a5c"/><rect x="77.3" y="81" width="6" height="6" fill="#5a5a5c"/><rect x="88.4" y="18.5" width="6" height="6" fill="#5a5a5c"/><rect x="88.4" y="81" width="6" height="6" fill="#5a5a5c"/><rect x="99.5" y="18.5" width="6" height="6" fill="#5a5a5c"/><rect x="99.5" y="81" width="6" height="6" fill="#5a5a5c"/><rect x="110.6" y="18.5" width="6" height="6" fill="#5a5a5c"/><rect x="110.6" y="81" width="6" height="6" fill="#5a5a5c"/><rect x="121.7" y="18.5" width="6" height="6" fill="#5a5a5c"/><rect x="121.7" y="81" width="6" height="6" fill="#5a5a5c"/><rect x="132.8" y="18.5" width="6" height="6" fill="#5a5a5c"/><rect x="132.8" y="81" width="6" height="6" fill="#5a5a5c"/><rect x="43.5" y="29.5" width="98" height="46" rx="3" fill="#59595b"/></svg><svg width="50" height="50" viewBox="0 0 50 50" style="position:absolute;left:67px;top:28px"><circle cx="25" cy="25" r="23" fill="#2b2a2b"/><path d="M17.3 13.2 Q15 11.9 15 14.5 V35.5 Q15 38.1 17.3 36.8 L37.6 26.6 Q40 25 37.6 23.4 Z" fill="#fff"/></svg></div>
<div class="tx" style="left:210px;top:361.96px;font-size:13px;color:#1c1c1c;font-weight:bold;letter-spacing:0.15px">Easter Sunday Worship</div>
<svg width="242" height="52" style="position:absolute;left:210px;top:390px"><rect x="0.5" y="0.5" width="240.5" height="50" rx="7" fill="none" stroke="#b4b4b4" stroke-width="1" stroke-dasharray="4.6 2.9"/></svg>
<svg width="242" height="52" style="position:absolute;left:507px;top:390px"><rect x="0.5" y="0.5" width="240.5" height="50" rx="7" fill="none" stroke="#b4b4b4" stroke-width="1" stroke-dasharray="4.6 2.9"/></svg>
<div style="position:absolute;left:244px;top:401.2px;"><svg width="10" height="10" viewBox="0 0 10 10" style="display:block"><rect x="0.5" y="0.5" width="9" height="9" fill="none" stroke="#777" stroke-width="1"/><rect x="0.5" y="0.5" width="2.4" height="9" fill="#888"/><rect x="7.1" y="0.5" width="2.4" height="9" fill="#888"/><path d="M1.5 1 V9 M8.5 1 V9" stroke="#bbb" stroke-width=".6"/><line x1="2.9" y1="5" x2="7.1" y2="5" stroke="#777" stroke-width="1"/></svg></div>
<div class="tx" style="left:259.5px;top:402.44px;font-size:10px;color:#333;font-weight:normal;">WEBM</div>
<div style="position:absolute;left:244px;top:419.6px;"><svg width="12" height="12" viewBox="0 0 12 12" style="display:block"><circle cx="6" cy="6" r="5.7" fill="#1e1e1e"/><path d="M5.3 2.8 V6.5 H8.4" fill="none" stroke="#fff" stroke-width="1.3"/></svg></div>
<div class="tx" style="left:259.5px;top:421.74px;font-size:10px;color:#333;font-weight:normal;letter-spacing:0.5px">00:03:12</div>
<div style="position:absolute;left:349px;top:401.8px;"><svg width="12" height="10" viewBox="0 0 12 10" style="display:block"><rect x="0.6" y="0.6" width="10.8" height="7" rx="0.6" fill="none" stroke="#555" stroke-width="1.1"/><rect x="2.2" y="2.2" width="7.6" height="3" fill="#222"/><path d="M3.8 7.6 V9.4 H8.2 V7.6" fill="none" stroke="#666" stroke-width="0.9"/></svg></div>
<div class="tx" style="left:365.5px;top:402.44px;font-size:10px;color:#333;font-weight:normal;">N/A</div>
<div style="position:absolute;left:349.5px;top:420.8px;"><svg width="11" height="11" viewBox="0 0 11 11" style="display:block"><ellipse cx="5.5" cy="2" rx="5.1" ry="1.8" fill="#1e1e1e"/><path d="M0.4 3.6 Q5.5 6.2 10.6 3.6 V5.8 Q5.5 8.4 0.4 5.8 Z" fill="#1e1e1e"/><path d="M0.4 7.4 Q5.5 10 10.6 7.4 V9.2 Q5.5 11.8 0.4 9.2 Z" fill="#1e1e1e"/></svg></div>
<div class="tx" style="left:366.5px;top:421.74px;font-size:10px;color:#333;font-weight:normal;letter-spacing:0.5px">3.0MB</div>
<div style="position:absolute;left:546.5px;top:401.2px;"><svg width="10" height="10" viewBox="0 0 10 10" style="display:block"><rect x="0.5" y="0.5" width="9" height="9" fill="none" stroke="#777" stroke-width="1"/><rect x="0.5" y="0.5" width="2.4" height="9" fill="#888"/><rect x="7.1" y="0.5" width="2.4" height="9" fill="#888"/><path d="M1.5 1 V9 M8.5 1 V9" stroke="#bbb" stroke-width=".6"/><line x1="2.9" y1="5" x2="7.1" y2="5" stroke="#777" stroke-width="1"/></svg></div>
<div class="tx" style="left:562px;top:402.44px;font-size:10px;color:#333;font-weight:normal;letter-spacing:0.5px">MP4</div>
<div style="position:absolute;left:546.5px;top:419.6px;"><svg width="12" height="12" viewBox="0 0 12 12" style="display:block"><circle cx="6" cy="6" r="5.7" fill="#1e1e1e"/><path d="M5.3 2.8 V6.5 H8.4" fill="none" stroke="#fff" stroke-width="1.3"/></svg></div>
<div class="tx" style="left:562px;top:421.74px;font-size:10px;color:#333;font-weight:normal;letter-spacing:0.5px">00:03:12</div>
<div style="position:absolute;left:639px;top:401.8px;"><svg width="12" height="10" viewBox="0 0 12 10" style="display:block"><rect x="0.6" y="0.6" width="10.8" height="7" rx="0.6" fill="none" stroke="#555" stroke-width="1.1"/><rect x="2.2" y="2.2" width="7.6" height="3" fill="#222"/><path d="M3.8 7.6 V9.4 H8.2 V7.6" fill="none" stroke="#666" stroke-width="0.9"/></svg></div>
<div class="tx" style="left:655px;top:402.44px;font-size:10px;color:#333;font-weight:normal;">N/A</div>
<div style="position:absolute;left:639.5px;top:420.8px;"><svg width="11" height="11" viewBox="0 0 11 11" style="display:block"><ellipse cx="5.5" cy="2" rx="5.1" ry="1.8" fill="#1e1e1e"/><path d="M0.4 3.6 Q5.5 6.2 10.6 3.6 V5.8 Q5.5 8.4 0.4 5.8 Z" fill="#1e1e1e"/><path d="M0.4 7.4 Q5.5 10 10.6 7.4 V9.2 Q5.5 11.8 0.4 9.2 Z" fill="#1e1e1e"/></svg></div>
<div class="tx" style="left:656px;top:421.74px;font-size:10px;color:#333;font-weight:normal;letter-spacing:0.5px">7.39 MB</div>
<div style="position:absolute;left:469px;top:408px;"><svg width="20" height="12" viewBox="0 0 20 12" style="display:block"><path d="M0 6 H12" stroke="#222" stroke-width="2.4" stroke-dasharray="1.6 1.2"/><path d="M11 1.2 L18.5 6 L11 10.8 L12.5 6 Z" fill="#222"/><path d="M10 6 H15" stroke="#222" stroke-width="2.4"/></svg></div>
<div class="btn" style="top:405px"><div style="position:absolute;left:6.8px;top:0.9px;"><svg width="16" height="16" viewBox="0 0 16 16" style="display:block"><path d="M7.13 0.75 L8.87 0.75 L10.03 3.10 L12.51 2.26 L13.74 3.49 L12.90 5.97 L15.25 7.13 L15.25 8.87 L12.90 10.03 L13.74 12.51 L12.51 13.74 L10.03 12.90 L8.87 15.25 L7.13 15.25 L5.97 12.90 L3.49 13.74 L2.26 12.51 L3.10 10.03 L0.75 8.87 L0.75 7.13 L3.10 5.97 L2.26 3.49 L3.49 2.26 L5.97 3.10 Z" fill="none" stroke="#666" stroke-width="1.05" stroke-linejoin="round"/><circle cx="8" cy="8" r="3" fill="none" stroke="#666" stroke-width="1.05"/></svg></div><div class="tx" style="left:27px;top:1.96px;font-size:13px;color:#333;font-weight:normal;">Settings</div></div>
<div style="position:absolute;left:900px;top:399px;"><svg width="34" height="32" viewBox="0 0 34 32" style="display:block"><rect x="3.6" y="0.6" width="26.8" height="30" fill="#111"/><rect x="9.2" y="1.6" width="15.6" height="28" fill="#2aa3ea"/><path d="M12 9 L22 1.6 L24.8 1.6 L24.8 4 L15 9 Z" fill="#7cd0fa" opacity=".45"/><rect x="5.2" y="2.3" width="3" height="2.7" fill="#fff"/><rect x="25.8" y="2.3" width="3" height="2.7" fill="#fff"/><rect x="5.2" y="6.2" width="3" height="2.7" fill="#fff"/><rect x="25.8" y="6.2" width="3" height="2.7" fill="#fff"/><rect x="5.2" y="22.3" width="3" height="2.7" fill="#fff"/><rect x="25.8" y="22.3" width="3" height="2.7" fill="#fff"/><rect x="5.2" y="26.2" width="3" height="2.7" fill="#fff"/><rect x="25.8" y="26.2" width="3" height="2.7" fill="#fff"/><rect x="0.6" y="9.8" width="32.8" height="11" rx="2.6" fill="#3f82d8" stroke="#2a5ca6" stroke-width="1"/><rect x="1.4" y="10.5" width="31.2" height="3" rx="1.2" fill="#6aa6ea" opacity=".5"/><rect x="6.3" y="11.3" width="21.4" height="8" rx="1.6" fill="#0d1a2a"/><text x="17" y="18.6" text-anchor="middle" font-family="Liberation Sans" font-weight="bold" font-size="9.4" fill="#fff" stroke="#fff" stroke-width="0.35" textLength="18.5" lengthAdjust="spacingAndGlyphs">MP4</text></svg></div>
<div class="sep" style="top:574px"></div>
<div class="thumb" style="top:468px;background:#0b0610"><svg width="50" height="50" viewBox="0 0 50 50" style="position:absolute;left:67px;top:28px"><circle cx="25" cy="25" r="23" fill="#2e2a2c"/><path d="M17.3 13.2 Q15 11.9 15 14.5 V35.5 Q15 38.1 17.3 36.8 L37.6 26.6 Q40 25 37.6 23.4 Z" fill="#fff"/></svg></div>
<div class="tx" style="left:210px;top:477.96px;font-size:13px;color:#1c1c1c;font-weight:bold;letter-spacing:0.15px">Five Little Speckled Frogs</div>
<svg width="242" height="52" style="position:absolute;left:210px;top:506px"><rect x="0.5" y="0.5" width="240.5" height="50" rx="7" fill="none" stroke="#b4b4b4" stroke-width="1" stroke-dasharray="4.6 2.9"/></svg>
<svg width="242" height="52" style="position:absolute;left:507px;top:506px"><rect x="0.5" y="0.5" width="240.5" height="50" rx="7" fill="none" stroke="#b4b4b4" stroke-width="1" stroke-dasharray="4.6 2.9"/></svg>
<div style="position:absolute;left:244px;top:517.2px;"><svg width="10" height="10" viewBox="0 0 10 10" style="display:block"><rect x="0.5" y="0.5" width="9" height="9" fill="none" stroke="#777" stroke-width="1"/><rect x="0.5" y="0.5" width="2.4" height="9" fill="#888"/><rect x="7.1" y="0.5" width="2.4" height="9" fill="#888"/><path d="M1.5 1 V9 M8.5 1 V9" stroke="#bbb" stroke-width=".6"/><line x1="2.9" y1="5" x2="7.1" y2="5" stroke="#777" stroke-width="1"/></svg></div>
<div class="tx" style="left:259.5px;top:518.44px;font-size:10px;color:#333;font-weight:normal;">WEBM</div>
<div style="position:absolute;left:244px;top:535.6px;"><svg width="12" height="12" viewBox="0 0 12 12" style="display:block"><circle cx="6" cy="6" r="5.7" fill="#1e1e1e"/><path d="M5.3 2.8 V6.5 H8.4" fill="none" stroke="#fff" stroke-width="1.3"/></svg></div>
<div class="tx" style="left:259.5px;top:537.74px;font-size:10px;color:#333;font-weight:normal;letter-spacing:0.5px">00:01:50</div>
<div style="position:absolute;left:349px;top:517.8px;"><svg width="12" height="10" viewBox="0 0 12 10" style="display:block"><rect x="0.6" y="0.6" width="10.8" height="7" rx="0.6" fill="none" stroke="#555" stroke-width="1.1"/><rect x="2.2" y="2.2" width="7.6" height="3" fill="#222"/><path d="M3.8 7.6 V9.4 H8.2 V7.6" fill="none" stroke="#666" stroke-width="0.9"/></svg></div>
<div class="tx" style="left:365.5px;top:518.44px;font-size:10px;color:#333;font-weight:normal;letter-spacing:0.5px">1920x1080</div>
<div style="position:absolute;left:349.5px;top:536.8px;"><svg width="11" height="11" viewBox="0 0 11 11" style="display:block"><ellipse cx="5.5" cy="2" rx="5.1" ry="1.8" fill="#1e1e1e"/><path d="M0.4 3.6 Q5.5 6.2 10.6 3.6 V5.8 Q5.5 8.4 0.4 5.8 Z" fill="#1e1e1e"/><path d="M0.4 7.4 Q5.5 10 10.6 7.4 V9.2 Q5.5 11.8 0.4 9.2 Z" fill="#1e1e1e"/></svg></div>
<div class="tx" style="left:366.5px;top:537.74px;font-size:10px;color:#333;font-weight:normal;letter-spacing:0.5px">16.0MB</div>
<div style="position:absolute;left:546.5px;top:517.2px;"><svg width="10" height="10" viewBox="0 0 10 10" style="display:block"><rect x="0.5" y="0.5" width="9" height="9" fill="none" stroke="#777" stroke-width="1"/><rect x="0.5" y="0.5" width="2.4" height="9" fill="#888"/><rect x="7.1" y="0.5" width="2.4" height="9" fill="#888"/><path d="M1.5 1 V9 M8.5 1 V9" stroke="#bbb" stroke-width=".6"/><line x1="2.9" y1="5" x2="7.1" y2="5" stroke="#777" stroke-width="1"/></svg></div>
<div class="tx" style="left:562px;top:518.44px;font-size:10px;color:#333;font-weight:normal;letter-spacing:0.5px">MP4</div>
<div style="position:absolute;left:546.5px;top:535.6px;"><svg width="12" height="12" viewBox="0 0 12 12" style="display:block"><circle cx="6" cy="6" r="5.7" fill="#1e1e1e"/><path d="M5.3 2.8 V6.5 H8.4" fill="none" stroke="#fff" stroke-width="1.3"/></svg></div>
<div class="tx" style="left:562px;top:537.74px;font-size:10px;color:#333;font-weight:normal;letter-spacing:0.5px">00:01:50</div>
<div style="position:absolute;left:639px;top:517.8px;"><svg width="12" height="10" viewBox="0 0 12 10" style="display:block"><rect x="0.6" y="0.6" width="10.8" height="7" rx="0.6" fill="none" stroke="#555" stroke-width="1.1"/><rect x="2.2" y="2.2" width="7.6" height="3" fill="#222"/><path d="M3.8 7.6 V9.4 H8.2 V7.6" fill="none" stroke="#666" stroke-width="0.9"/></svg></div>
<div class="tx" style="left:655px;top:518.44px;font-size:10px;color:#333;font-weight:normal;letter-spacing:0.5px">1920x1080</div>
<div style="position:absolute;left:639.5px;top:536.8px;"><svg width="11" height="11" viewBox="0 0 11 11" style="display:block"><ellipse cx="5.5" cy="2" rx="5.1" ry="1.8" fill="#1e1e1e"/><path d="M0.4 3.6 Q5.5 6.2 10.6 3.6 V5.8 Q5.5 8.4 0.4 5.8 Z" fill="#1e1e1e"/><path d="M0.4 7.4 Q5.5 10 10.6 7.4 V9.2 Q5.5 11.8 0.4 9.2 Z" fill="#1e1e1e"/></svg></div>
<div class="tx" style="left:656px;top:537.74px;font-size:10px;color:#333;font-weight:normal;letter-spacing:0.5px">101.61 MB</div>
<div style="position:absolute;left:469px;top:524px;"><svg width="20" height="12" viewBox="0 0 20 12" style="display:block"><path d="M0 6 H12" stroke="#222" stroke-width="2.4" stroke-dasharray="1.6 1.2"/><path d="M11 1.2 L18.5 6 L11 10.8 L12.5 6 Z" fill="#222"/><path d="M10 6 H15" stroke="#222" stroke-width="2.4"/></svg></div>
<div class="btn" style="top:521px"><div style="position:absolute;left:6.8px;top:0.9px;"><svg width="16" height="16" viewBox="0 0 16 16" style="display:block"><path d="M7.13 0.75 L8.87 0.75 L10.03 3.10 L12.51 2.26 L13.74 3.49 L12.90 5.97 L15.25 7.13 L15.25 8.87 L12.90 10.03 L13.74 12.51 L12.51 13.74 L10.03 12.90 L8.87 15.25 L7.13 15.25 L5.97 12.90 L3.49 13.74 L2.26 12.51 L3.10 10.03 L0.75 8.87 L0.75 7.13 L3.10 5.97 L2.26 3.49 L3.49 2.26 L5.97 3.10 Z" fill="none" stroke="#666" stroke-width="1.05" stroke-linejoin="round"/><circle cx="8" cy="8" r="3" fill="none" stroke="#666" stroke-width="1.05"/></svg></div><div class="tx" style="left:27px;top:1.96px;font-size:13px;color:#333;font-weight:normal;">Settings</div></div>
<div style="position:absolute;left:900px;top:515px;"><svg width="34" height="32" viewBox="0 0 34 32" style="display:block"><rect x="3.6" y="0.6" width="26.8" height="30" fill="#111"/><rect x="9.2" y="1.6" width="15.6" height="28" fill="#2aa3ea"/><path d="M12 9 L22 1.6 L24.8 1.6 L24.8 4 L15 9 Z" fill="#7cd0fa" opacity=".45"/><rect x="5.2" y="2.3" width="3" height="2.7" fill="#fff"/><rect x="25.8" y="2.3" width="3" height="2.7" fill="#fff"/><rect x="5.2" y="6.2" width="3" height="2.7" fill="#fff"/><rect x="25.8" y="6.2" width="3" height="2.7" fill="#fff"/><rect x="5.2" y="22.3" width="3" height="2.7" fill="#fff"/><rect x="25.8" y="22.3" width="3" height="2.7" fill="#fff"/><rect x="5.2" y="26.2" width="3" height="2.7" fill="#fff"/><rect x="25.8" y="26.2" width="3" height="2.7" fill="#fff"/><rect x="0.6" y="9.8" width="32.8" height="11" rx="2.6" fill="#3f82d8" stroke="#2a5ca6" stroke-width="1"/><rect x="1.4" y="10.5" width="31.2" height="3" rx="1.2" fill="#6aa6ea" opacity=".5"/><rect x="6.3" y="11.3" width="21.4" height="8" rx="1.6" fill="#0d1a2a"/><text x="17" y="18.6" text-anchor="middle" font-family="Liberation Sans" font-weight="bold" font-size="9.4" fill="#fff" stroke="#fff" stroke-width="0.35" textLength="18.5" lengthAdjust="spacingAndGlyphs">MP4</text></svg></div>
<div class="sep" style="top:690px"></div>
<div class="thumb" style="top:584px;background:linear-gradient(180deg,#454546 0%,#515152 50%,#5b5b5c 100%)"><svg width="185" height="106" viewBox="0 0 185 106" style="position:absolute;left:0;top:0"><rect x="40" y="15" width="105" height="76" rx="3" fill="#7d7d7e"/><rect x="44.0" y="18.5" width="6" height="6" fill="#5a5a5c"/><rect x="44.0" y="81" width="6" height="6" fill="#5a5a5c"/><rect x="55.1" y="18.5" width="6" height="6" fill="#5a5a5c"/><rect x="55.1" y="81" width="6" height="6" fill="#5a5a5c"/><rect x="66.2" y="18.5" width="6" height="6" fill="#5a5a5c"/><rect x="66.2" y="81" width="6" height="6" fill="#5a5a5c"/><rect x="77.3" y="18.5" width="6" height="6" fill="#5a5a5c"/><rect x="77.3" y="81" width="6" height="6" fill="#5a5a5c"/><rect x="88.4" y="18.5" width="6" height="6" fill="#5a5a5c"/><rect x="88.4" y="81" width="6" height="6" fill="#5a5a5c"/><rect x="99.5" y="18.5" width="6" height="6" fill="#5a5a5c"/><rect x="99.5" y="81" width="6" height="6" fill="#5a5a5c"/><rect x="110.6" y="18.5" width="6" height="6" fill="#5a5a5c"/><rect x="110.6" y="81" width="6" height="6" fill="#5a5a5c"/><rect x="121.7" y="18.5" width="6" height="6" fill="#5a5a5c"/><rect x="121.7" y="81" width="6" height="6" fill="#5a5a5c"/><rect x="132.8" y="18.5" width="6" height="6" fill="#5a5a5c"/><rect x="132.8" y="81" width="6" height="6" fill="#5a5a5c"/><rect x="43.5" y="29.5" width="98" height="46" rx="3" fill="#59595b"/></svg><svg width="50" height="50" viewBox="0 0 50 50" style="position:absolute;left:67px;top:28px"><circle cx="25" cy="25" r="23" fill="#2b2a2b"/><path d="M17.3 13.2 Q15 11.9 15 14.5 V35.5 Q15 38.1 17.3 36.8 L37.6 26.6 Q40 25 37.6 23.4 Z" fill="#fff"/></svg></div>
<div class="tx" style="left:210px;top:593.96px;font-size:13px;color:#1c1c1c;font-weight:bold;letter-spacing:0.15px">Jesus Paid It All - Kim Walker-Smith | Worship Circle Hymns</div>
<svg width="242" height="52" style="position:absolute;left:210px;top:622px"><rect x="0.5" y="0.5" width="240.5" height="50" rx="7" fill="none" stroke="#b4b4b4" stroke-width="1" stroke-dasharray="4.6 2.9"/></svg>
<svg width="242" height="52" style="position:absolute;left:507px;top:622px"><rect x="0.5" y="0.5" width="240.5" height="50" rx="7" fill="none" stroke="#b4b4b4" stroke-width="1" stroke-dasharray="4.6 2.9"/></svg>
<div style="position:absolute;left:244px;top:633.2px;"><svg width="10" height="10" viewBox="0 0 10 10" style="display:block"><rect x="0.5" y="0.5" width="9" height="9" fill="none" stroke="#777" stroke-width="1"/><rect x="0.5" y="0.5" width="2.4" height="9" fill="#888"/><rect x="7.1" y="0.5" width="2.4" height="9" fill="#888"/><path d="M1.5 1 V9 M8.5 1 V9" stroke="#bbb" stroke-width=".6"/><line x1="2.9" y1="5" x2="7.1" y2="5" stroke="#777" stroke-width="1"/></svg></div>
<div class="tx" style="left:259.5px;top:634.44px;font-size:10px;color:#333;font-weight:normal;">WEBM</div>
<div style="position:absolute;left:244px;top:651.6px;"><svg width="12" height="12" viewBox="0 0 12 12" style="display:block"><circle cx="6" cy="6" r="5.7" fill="#1e1e1e"/><path d="M5.3 2.8 V6.5 H8.4" fill="none" stroke="#fff" stroke-width="1.3"/></svg></div>
<div class="tx" style="left:259.5px;top:653.74px;font-size:10px;color:#333;font-weight:normal;letter-spacing:0.5px">00:04:30</div>
<div style="position:absolute;left:349px;top:633.8px;"><svg width="12" height="10" viewBox="0 0 12 10" style="display:block"><rect x="0.6" y="0.6" width="10.8" height="7" rx="0.6" fill="none" stroke="#555" stroke-width="1.1"/><rect x="2.2" y="2.2" width="7.6" height="3" fill="#222"/><path d="M3.8 7.6 V9.4 H8.2 V7.6" fill="none" stroke="#666" stroke-width="0.9"/></svg></div>
<div class="tx" style="left:365.5px;top:634.44px;font-size:10px;color:#333;font-weight:normal;">N/A</div>
<div style="position:absolute;left:349.5px;top:652.8px;"><svg width="11" height="11" viewBox="0 0 11 11" style="display:block"><ellipse cx="5.5" cy="2" rx="5.1" ry="1.8" fill="#1e1e1e"/><path d="M0.4 3.6 Q5.5 6.2 10.6 3.6 V5.8 Q5.5 8.4 0.4 5.8 Z" fill="#1e1e1e"/><path d="M0.4 7.4 Q5.5 10 10.6 7.4 V9.2 Q5.5 11.8 0.4 9.2 Z" fill="#1e1e1e"/></svg></div>
<div class="tx" style="left:366.5px;top:653.74px;font-size:10px;color:#333;font-weight:normal;letter-spacing:0.5px">3.0MB</div>
<div style="position:absolute;left:546.5px;top:633.2px;"><svg width="10" height="10" viewBox="0 0 10 10" style="display:block"><rect x="0.5" y="0.5" width="9" height="9" fill="none" stroke="#777" stroke-width="1"/><rect x="0.5" y="0.5" width="2.4" height="9" fill="#888"/><rect x="7.1" y="0.5" width="2.4" height="9" fill="#888"/><path d="M1.5 1 V9 M8.5 1 V9" stroke="#bbb" stroke-width=".6"/><line x1="2.9" y1="5" x2="7.1" y2="5" stroke="#777" stroke-width="1"/></svg></div>
<div class="tx" style="left:562px;top:634.44px;font-size:10px;color:#333;font-weight:normal;letter-spacing:0.5px">MP4</div>
<div style="position:absolute;left:546.5px;top:651.6px;"><svg width="12" height="12" viewBox="0 0 12 12" style="display:block"><circle cx="6" cy="6" r="5.7" fill="#1e1e1e"/><path d="M5.3 2.8 V6.5 H8.4" fill="none" stroke="#fff" stroke-width="1.3"/></svg></div>
<div class="tx" style="left:562px;top:653.74px;font-size:10px;color:#333;font-weight:normal;letter-spacing:0.5px">00:04:30</div>
<div style="position:absolute;left:639px;top:633.8px;"><svg width="12" height="10" viewBox="0 0 12 10" style="display:block"><rect x="0.6" y="0.6" width="10.8" height="7" rx="0.6" fill="none" stroke="#555" stroke-width="1.1"/><rect x="2.2" y="2.2" width="7.6" height="3" fill="#222"/><path d="M3.8 7.6 V9.4 H8.2 V7.6" fill="none" stroke="#666" stroke-width="0.9"/></svg></div>
<div class="tx" style="left:655px;top:634.44px;font-size:10px;color:#333;font-weight:normal;">N/A</div>
<div style="position:absolute;left:639.5px;top:652.8px;"><svg width="11" height="11" viewBox="0 0 11 11" style="display:block"><ellipse cx="5.5" cy="2" rx="5.1" ry="1.8" fill="#1e1e1e"/><path d="M0.4 3.6 Q5.5 6.2 10.6 3.6 V5.8 Q5.5 8.4 0.4 5.8 Z" fill="#1e1e1e"/><path d="M0.4 7.4 Q5.5 10 10.6 7.4 V9.2 Q5.5 11.8 0.4 9.2 Z" fill="#1e1e1e"/></svg></div>
<div class="tx" style="left:656px;top:653.74px;font-size:10px;color:#333;font-weight:normal;letter-spacing:0.5px">7.39 MB</div>
<div style="position:absolute;left:469px;top:640px;"><svg width="20" height="12" viewBox="0 0 20 12" style="display:block"><path d="M0 6 H12" stroke="#222" stroke-width="2.4" stroke-dasharray="1.6 1.2"/><path d="M11 1.2 L18.5 6 L11 10.8 L12.5 6 Z" fill="#222"/><path d="M10 6 H15" stroke="#222" stroke-width="2.4"/></svg></div>
<div class="btn" style="top:637px"><div style="position:absolute;left:6.8px;top:0.9px;"><svg width="16" height="16" viewBox="0 0 16 16" style="display:block"><path d="M7.13 0.75 L8.87 0.75 L10.03 3.10 L12.51 2.26 L13.74 3.49 L12.90 5.97 L15.25 7.13 L15.25 8.87 L12.90 10.03 L13.74 12.51 L12.51 13.74 L10.03 12.90 L8.87 15.25 L7.13 15.25 L5.97 12.90 L3.49 13.74 L2.26 12.51 L3.10 10.03 L0.75 8.87 L0.75 7.13 L3.10 5.97 L2.26 3.49 L3.49 2.26 L5.97 3.10 Z" fill="none" stroke="#666" stroke-width="1.05" stroke-linejoin="round"/><circle cx="8" cy="8" r="3" fill="none" stroke="#666" stroke-width="1.05"/></svg></div><div class="tx" style="left:27px;top:1.96px;font-size:13px;color:#333;font-weight:normal;">Settings</div></div>
<div style="position:absolute;left:900px;top:631px;"><svg width="34" height="32" viewBox="0 0 34 32" style="display:block"><rect x="3.6" y="0.6" width="26.8" height="30" fill="#111"/><rect x="9.2" y="1.6" width="15.6" height="28" fill="#2aa3ea"/><path d="M12 9 L22 1.6 L24.8 1.6 L24.8 4 L15 9 Z" fill="#7cd0fa" opacity=".45"/><rect x="5.2" y="2.3" width="3" height="2.7" fill="#fff"/><rect x="25.8" y="2.3" width="3" height="2.7" fill="#fff"/><rect x="5.2" y="6.2" width="3" height="2.7" fill="#fff"/><rect x="25.8" y="6.2" width="3" height="2.7" fill="#fff"/><rect x="5.2" y="22.3" width="3" height="2.7" fill="#fff"/><rect x="25.8" y="22.3" width="3" height="2.7" fill="#fff"/><rect x="5.2" y="26.2" width="3" height="2.7" fill="#fff"/><rect x="25.8" y="26.2" width="3" height="2.7" fill="#fff"/><rect x="0.6" y="9.8" width="32.8" height="11" rx="2.6" fill="#3f82d8" stroke="#2a5ca6" stroke-width="1"/><rect x="1.4" y="10.5" width="31.2" height="3" rx="1.2" fill="#6aa6ea" opacity=".5"/><rect x="6.3" y="11.3" width="21.4" height="8" rx="1.6" fill="#0d1a2a"/><text x="17" y="18.6" text-anchor="middle" font-family="Liberation Sans" font-weight="bold" font-size="9.4" fill="#fff" stroke="#fff" stroke-width="0.35" textLength="18.5" lengthAdjust="spacingAndGlyphs">MP4</text></svg></div>
<div style="position:absolute;left:962px;top:592px;"><svg width="18" height="18" viewBox="0 0 18 18" style="display:block"><path d="M1.5 16.5 L2.5 12.2 L12.3 2.4 L15.6 5.7 L5.8 15.5 Z" fill="#fff" stroke="#555" stroke-width="1.1" stroke-linejoin="round"/><path d="M11.3 3.4 L13.2 1.5 Q13.8 0.9 14.4 1.5 L16.5 3.6 Q17.1 4.2 16.5 4.8 L14.6 6.7 Z" fill="#2a2a2a"/><path d="M3.5 13.5 L13.2 3.8 M2.5 12.2 L5.8 15.5" stroke="#555" stroke-width="0.9"/></svg></div>
</div>
<div class="vtrack"></div>
<div class="pop">
<div class="phead"></div>
<div class="tab" style="left:9px"></div>
<div style="position:absolute;left:15.5px;top:13px;z-index:2"><svg width="18" height="18" viewBox="0 0 18 18" style="display:block"><path d="M1.3 9.8 A7.3 7.3 0 1 0 4.6 2.6" fill="none" stroke="#3f7fa8" stroke-width="1.25" stroke-linecap="round"/><path d="M1.2 2.4 L6.2 2.2 L3.4 6.2 Z" fill="#3a86c4"/><path d="M6.9 5.9 L12.4 9 L6.9 12.1 Z" fill="#2f9be6"/></svg></div>
<div class="tx" style="left:47px;top:16.35px;font-size:11.5px;color:#333;font-weight:normal;z-index:2;letter-spacing:0.1px">Recent</div>
<div class="tab sel" style="left:99px"></div>
<div style="position:absolute;left:106px;top:13px;z-index:2"><svg width="16" height="18" viewBox="0 0 16 18" style="display:block"><rect x="0.6" y="0.6" width="14.8" height="16.8" fill="#dcdcdc" stroke="#111" stroke-width="1.2"/><rect x="3.6" y="1" width="8.8" height="16" fill="#2aa2ea" stroke="#0e2a3c" stroke-width="0.9"/><path d="M3.6 9 H12.4" stroke="#0e3a55" stroke-width="0.9"/><path d="M5 7 L11 2" stroke="#7fd0fa" stroke-width="1.4" opacity=".55"/><rect x="1.9" y="3.5" width="1.6" height="0.9" fill="#333"/><rect x="12.5" y="3.5" width="1.6" height="0.9" fill="#333"/><rect x="1.9" y="6.5" width="1.6" height="0.9" fill="#333"/><rect x="12.5" y="6.5" width="1.6" height="0.9" fill="#333"/><rect x="1.9" y="9.5" width="1.6" height="0.9" fill="#333"/><rect x="12.5" y="9.5" width="1.6" height="0.9" fill="#333"/><rect x="1.9" y="12.5" width="1.6" height="0.9" fill="#333"/><rect x="12.5" y="12.5" width="1.6" height="0.9" fill="#333"/><rect x="1.9" y="15.5" width="1.6" height="0.9" fill="#333"/><rect x="12.5" y="15.5" width="1.6" height="0.9" fill="#333"/></svg></div>
<div class="tx" style="left:140px;top:16.35px;font-size:11.5px;color:#333;font-weight:normal;z-index:2;letter-spacing:0.1px">Video</div>
<div class="tab" style="left:189px"></div>
<div style="position:absolute;left:195px;top:13px;z-index:2"><svg width="20" height="18" viewBox="0 0 20 18" style="display:block"><defs><linearGradient id="ag" x1="0" y1="1" x2="1" y2="0"><stop offset="0" stop-color="#35a8ee"/><stop offset="1" stop-color="#1f5f96"/></linearGradient></defs><path d="M8.2 12.5 L13.2 1.8 Q15.2 6.5 17.8 10" fill="none" stroke="url(#ag)" stroke-width="2.1" stroke-linecap="round" stroke-linejoin="round"/><ellipse cx="5.2" cy="13" rx="4.4" ry="3.3" transform="rotate(-22 5.2 13)" fill="#2b95de"/></svg></div>
<div class="tx" style="left:231px;top:16.35px;font-size:11.5px;color:#333;font-weight:normal;z-index:2;letter-spacing:0.1px">Audio</div>
<div class="tab" style="left:279px"></div>
<div style="position:absolute;left:288px;top:12px;z-index:2"><svg width="13" height="20" viewBox="0 0 13 20" style="display:block"><rect x="0.8" y="0.8" width="11.4" height="18.4" rx="2" fill="#22a0ef" stroke="#1b5d8c" stroke-width="1.4"/><rect x="4" y="1" width="5" height="1.6" rx=".8" fill="#1b5d8c"/></svg></div>
<div class="tx" style="left:318px;top:16.35px;font-size:11.5px;color:#333;font-weight:normal;z-index:2;letter-spacing:0.1px">Device</div>
<div class="tab" style="left:369px"></div>
<div style="position:absolute;left:376px;top:14px;z-index:2"><svg width="17" height="16" viewBox="0 0 17 16" style="display:block"><rect x="0.8" y="0.8" width="15.4" height="14.4" rx="1.2" fill="#eef8fd" stroke="#5292b8" stroke-width="1.5"/><rect x="1.5" y="1.5" width="14" height="2.6" fill="#b8e8fb"/><path d="M0.8 4.6 H16.2" stroke="#5292b8" stroke-width="1.2"/><path d="M6.3 7.3 L11.4 10 L6.3 12.7 Z" fill="#2f8fd6"/></svg></div>
<div class="tx" style="left:414px;top:16.35px;font-size:11.5px;color:#333;font-weight:normal;z-index:2;letter-spacing:0.1px">Web</div>
<div class="tab" style="left:459px"></div>
<div style="position:absolute;left:467px;top:14px;z-index:2"><svg width="16" height="16" viewBox="0 0 16 16" style="display:block"><path d="M0.5 3 H14.8 M0.5 8.2 H14.8 M0.5 13.3 H14.8" stroke="#262626" stroke-width="1.4"/><path d="M4.7 0.8 L7 3 L4.7 5.2 L2.4 3 Z" fill="#3c9fdc"/><path d="M9.7 6 L12 8.2 L9.7 10.4 L7.4 8.2 Z" fill="#3c9fdc"/><path d="M4.7 11.1 L7 13.3 L4.7 15.5 L2.4 13.3 Z" fill="#3c9fdc"/></svg></div>
<div class="tx" style="left:495px;top:16.35px;font-size:11.5px;color:#333;font-weight:normal;z-index:2;letter-spacing:0.1px">Custom</div>
<div class="search" style="left:586px;top:7.5px"></div>
<div style="position:absolute;left:593px;top:12px;"><svg width="12" height="12" viewBox="0 0 12 12" style="display:block"><circle cx="4.8" cy="4.8" r="3.9" fill="none" stroke="#333" stroke-width="1.2"/><path d="M7.7 7.7 L11.2 11.2" stroke="#333" stroke-width="1.4" stroke-linecap="round"/></svg></div>
<div class="tx" style="left:611px;top:11.88px;font-size:12px;color:#c6c6c6;font-weight:normal;letter-spacing:0.2px">Search</div>
<div class="ltrack" style="left:229px;top:35px;height:383px"></div>
<div class="thumbbar" style="left:231px;top:37px;height:89px"></div>
<div style="position:absolute;left:19px;top:45.0px;"><svg width="34" height="32" viewBox="0 0 34 32" style="display:block"><rect x="3.6" y="0.6" width="26.8" height="30" fill="#111"/><rect x="9.2" y="1.6" width="15.6" height="28" fill="#2aa3ea"/><path d="M12 9 L22 1.6 L24.8 1.6 L24.8 4 L15 9 Z" fill="#7cd0fa" opacity=".45"/><rect x="5.2" y="2.3" width="3" height="2.7" fill="#fff"/><rect x="25.8" y="2.3" width="3" height="2.7" fill="#fff"/><rect x="5.2" y="6.2" width="3" height="2.7" fill="#fff"/><rect x="25.8" y="6.2" width="3" height="2.7" fill="#fff"/><rect x="5.2" y="22.3" width="3" height="2.7" fill="#fff"/><rect x="25.8" y="22.3" width="3" height="2.7" fill="#fff"/><rect x="5.2" y="26.2" width="3" height="2.7" fill="#fff"/><rect x="25.8" y="26.2" width="3" height="2.7" fill="#fff"/><rect x="0.6" y="9.8" width="32.8" height="11" rx="2.6" fill="#3f82d8" stroke="#2a5ca6" stroke-width="1"/><rect x="1.4" y="10.5" width="31.2" height="3" rx="1.2" fill="#6aa6ea" opacity=".5"/><rect x="6.3" y="11.3" width="21.4" height="8" rx="1.6" fill="#0d1a2a"/><text x="17" y="18.6" text-anchor="middle" font-family="Liberation Sans" font-weight="bold" font-size="9.4" fill="#fff" stroke="#fff" stroke-width="0.35" textLength="18.5" lengthAdjust="spacingAndGlyphs">MP4</text></svg></div>
<div class="tx" style="left:61px;top:55.88px;font-size:12px;color:#222;font-weight:normal;letter-spacing:0.1px">MP4</div>
<div style="position:absolute;left:19px;top:97.9px;"><svg width="34" height="32" viewBox="0 0 34 32" style="display:block"><rect x="3.6" y="0.6" width="26.8" height="30" fill="#111"/><rect x="9.2" y="1.6" width="15.6" height="28" fill="#2aa3ea"/><path d="M12 9 L22 1.6 L24.8 1.6 L24.8 4 L15 9 Z" fill="#7cd0fa" opacity=".45"/><rect x="5.2" y="22.3" width="3" height="2.7" fill="#fff"/><rect x="25.8" y="22.3" width="3" height="2.7" fill="#fff"/><rect x="5.2" y="26.2" width="3" height="2.7" fill="#fff"/><rect x="25.8" y="26.2" width="3" height="2.7" fill="#fff"/><rect x="3.5" y="0" width="27" height="9.5" fill="#111"/><text x="17" y="8" text-anchor="middle" font-family="Liberation Sans" font-weight="bold" font-size="8.2" fill="#fff" stroke="#fff" stroke-width="0.25" textLength="22" lengthAdjust="spacingAndGlyphs">HEVC</text><rect x="0.6" y="9.8" width="32.8" height="11" rx="2.6" fill="#3f82d8" stroke="#2a5ca6" stroke-width="1"/><rect x="1.4" y="10.5" width="31.2" height="3" rx="1.2" fill="#6aa6ea" opacity=".5"/><rect x="6.3" y="11.3" width="21.4" height="8" rx="1.6" fill="#0d1a2a"/><text x="17" y="18.6" text-anchor="middle" font-family="Liberation Sans" font-weight="bold" font-size="9.4" fill="#fff" stroke="#fff" stroke-width="0.35" textLength="18.5" lengthAdjust="spacingAndGlyphs">MP4</text></svg></div>
<div class="tx" style="left:61px;top:108.78px;font-size:12px;color:#222;font-weight:normal;letter-spacing:0.1px">HEVC MP4</div>
<div style="position:absolute;left:19px;top:150.8px;"><svg width="34" height="32" viewBox="0 0 34 32" style="display:block"><rect x="3.6" y="0.6" width="26.8" height="30" fill="#111"/><rect x="9.2" y="1.6" width="15.6" height="28" fill="#2aa3ea"/><path d="M12 9 L22 1.6 L24.8 1.6 L24.8 4 L15 9 Z" fill="#7cd0fa" opacity=".45"/><rect x="5.2" y="2.3" width="3" height="2.7" fill="#fff"/><rect x="25.8" y="2.3" width="3" height="2.7" fill="#fff"/><rect x="5.2" y="6.2" width="3" height="2.7" fill="#fff"/><rect x="25.8" y="6.2" width="3" height="2.7" fill="#fff"/><rect x="5.2" y="22.3" width="3" height="2.7" fill="#fff"/><rect x="25.8" y="22.3" width="3" height="2.7" fill="#fff"/><rect x="5.2" y="26.2" width="3" height="2.7" fill="#fff"/><rect x="25.8" y="26.2" width="3" height="2.7" fill="#fff"/><rect x="0.6" y="9.8" width="32.8" height="11" rx="2.6" fill="#3f82d8" stroke="#2a5ca6" stroke-width="1"/><rect x="1.4" y="10.5" width="31.2" height="3" rx="1.2" fill="#6aa6ea" opacity=".5"/><rect x="6.3" y="11.3" width="21.4" height="8" rx="1.6" fill="#0d1a2a"/><text x="17" y="18.6" text-anchor="middle" font-family="Liberation Sans" font-weight="bold" font-size="9.4" fill="#fff" stroke="#fff" stroke-width="0.35" textLength="18.5" lengthAdjust="spacingAndGlyphs">MOV</text></svg></div>
<div class="tx" style="left:61px;top:161.68px;font-size:12px;color:#222;font-weight:normal;letter-spacing:0.1px">MOV</div>
<div style="position:absolute;left:19px;top:203.7px;"><svg width="34" height="32" viewBox="0 0 34 32" style="display:block"><rect x="3.6" y="0.6" width="26.8" height="30" fill="#111"/><rect x="9.2" y="1.6" width="15.6" height="28" fill="#2aa3ea"/><path d="M12 9 L22 1.6 L24.8 1.6 L24.8 4 L15 9 Z" fill="#7cd0fa" opacity=".45"/><rect x="5.2" y="22.3" width="3" height="2.7" fill="#fff"/><rect x="25.8" y="22.3" width="3" height="2.7" fill="#fff"/><rect x="5.2" y="26.2" width="3" height="2.7" fill="#fff"/><rect x="25.8" y="26.2" width="3" height="2.7" fill="#fff"/><rect x="3.5" y="0" width="27" height="9.5" fill="#111"/><text x="17" y="8" text-anchor="middle" font-family="Liberation Sans" font-weight="bold" font-size="7.4" fill="#fff" stroke="#fff" stroke-width="0.25" textLength="24" lengthAdjust="spacingAndGlyphs">ProRes</text><rect x="0.6" y="9.8" width="32.8" height="11" rx="2.6" fill="#3f82d8" stroke="#2a5ca6" stroke-width="1"/><rect x="1.4" y="10.5" width="31.2" height="3" rx="1.2" fill="#6aa6ea" opacity=".5"/><rect x="6.3" y="11.3" width="21.4" height="8" rx="1.6" fill="#0d1a2a"/><text x="17" y="18.6" text-anchor="middle" font-family="Liberation Sans" font-weight="bold" font-size="9.4" fill="#fff" stroke="#fff" stroke-width="0.35" textLength="18.5" lengthAdjust="spacingAndGlyphs">MOV</text></svg></div>
<div class="tx" style="left:61px;top:214.58px;font-size:12px;color:#222;font-weight:normal;letter-spacing:0.1px">Apple ProRes MOV</div>
<div style="position:absolute;left:19px;top:256.6px;"><svg width="34" height="32" viewBox="0 0 34 32" style="display:block"><rect x="3.6" y="0.6" width="26.8" height="30" fill="#111"/><rect x="9.2" y="1.6" width="15.6" height="28" fill="#2aa3ea"/><path d="M12 9 L22 1.6 L24.8 1.6 L24.8 4 L15 9 Z" fill="#7cd0fa" opacity=".45"/><rect x="5.2" y="2.3" width="3" height="2.7" fill="#fff"/><rect x="25.8" y="2.3" width="3" height="2.7" fill="#fff"/><rect x="5.2" y="6.2" width="3" height="2.7" fill="#fff"/><rect x="25.8" y="6.2" width="3" height="2.7" fill="#fff"/><rect x="5.2" y="22.3" width="3" height="2.7" fill="#fff"/><rect x="25.8" y="22.3" width="3" height="2.7" fill="#fff"/><rect x="5.2" y="26.2" width="3" height="2.7" fill="#fff"/><rect x="25.8" y="26.2" width="3" height="2.7" fill="#fff"/><rect x="0.6" y="9.8" width="32.8" height="11" rx="2.6" fill="#3f82d8" stroke="#2a5ca6" stroke-width="1"/><rect x="1.4" y="10.5" width="31.2" height="3" rx="1.2" fill="#6aa6ea" opacity=".5"/><rect x="6.3" y="11.3" width="21.4" height="8" rx="1.6" fill="#0d1a2a"/><text x="17" y="18.6" text-anchor="middle" font-family="Liberation Sans" font-weight="bold" font-size="9.4" fill="#fff" stroke="#fff" stroke-width="0.35" textLength="18.5" lengthAdjust="spacingAndGlyphs">M4V</text></svg></div>
<div class="tx" style="left:61px;top:267.48px;font-size:12px;color:#222;font-weight:normal;letter-spacing:0.1px">M4V</div>
<div style="position:absolute;left:19px;top:309.5px;"><svg width="34" height="32" viewBox="0 0 34 32" style="display:block"><rect x="3.6" y="0.6" width="26.8" height="30" fill="#111"/><rect x="9.2" y="1.6" width="15.6" height="28" fill="#2aa3ea"/><path d="M12 9 L22 1.6 L24.8 1.6 L24.8 4 L15 9 Z" fill="#7cd0fa" opacity=".45"/><rect x="5.2" y="2.3" width="3" height="2.7" fill="#fff"/><rect x="25.8" y="2.3" width="3" height="2.7" fill="#fff"/><rect x="5.2" y="6.2" width="3" height="2.7" fill="#fff"/><rect x="25.8" y="6.2" width="3" height="2.7" fill="#fff"/><rect x="5.2" y="22.3" width="3" height="2.7" fill="#fff"/><rect x="25.8" y="22.3" width="3" height="2.7" fill="#fff"/><rect x="5.2" y="26.2" width="3" height="2.7" fill="#fff"/><rect x="25.8" y="26.2" width="3" height="2.7" fill="#fff"/><rect x="0.6" y="9.8" width="32.8" height="11" rx="2.6" fill="#3f82d8" stroke="#2a5ca6" stroke-width="1"/><rect x="1.4" y="10.5" width="31.2" height="3" rx="1.2" fill="#6aa6ea" opacity=".5"/><rect x="6.3" y="11.3" width="21.4" height="8" rx="1.6" fill="#0d1a2a"/><text x="17" y="18.6" text-anchor="middle" font-family="Liberation Sans" font-weight="bold" font-size="9.4" fill="#fff" stroke="#fff" stroke-width="0.35" textLength="18.5" lengthAdjust="spacingAndGlyphs">MKV</text></svg></div>
<div class="tx" style="left:61px;top:320.38px;font-size:12px;color:#222;font-weight:normal;letter-spacing:0.1px">MKV</div>
<div style="position:absolute;left:19px;top:362.4px;"><svg width="34" height="32" viewBox="0 0 34 32" style="display:block"><rect x="3.6" y="0.6" width="26.8" height="30" fill="#111"/><rect x="9.2" y="1.6" width="15.6" height="28" fill="#2aa3ea"/><path d="M12 9 L22 1.6 L24.8 1.6 L24.8 4 L15 9 Z" fill="#7cd0fa" opacity=".45"/><rect x="5.2" y="22.3" width="3" height="2.7" fill="#fff"/><rect x="25.8" y="22.3" width="3" height="2.7" fill="#fff"/><rect x="5.2" y="26.2" width="3" height="2.7" fill="#fff"/><rect x="25.8" y="26.2" width="3" height="2.7" fill="#fff"/><rect x="3.5" y="0" width="27" height="9.5" fill="#111"/><text x="17" y="8" text-anchor="middle" font-family="Liberation Sans" font-weight="bold" font-size="8.2" fill="#fff" stroke="#fff" stroke-width="0.25" textLength="22" lengthAdjust="spacingAndGlyphs">HEVC</text><rect x="0.6" y="9.8" width="32.8" height="11" rx="2.6" fill="#3f82d8" stroke="#2a5ca6" stroke-width="1"/><rect x="1.4" y="10.5" width="31.2" height="3" rx="1.2" fill="#6aa6ea" opacity=".5"/><rect x="6.3" y="11.3" width="21.4" height="8" rx="1.6" fill="#0d1a2a"/><text x="17" y="18.6" text-anchor="middle" font-family="Liberation Sans" font-weight="bold" font-size="9.4" fill="#fff" stroke="#fff" stroke-width="0.35" textLength="18.5" lengthAdjust="spacingAndGlyphs">MKV</text></svg></div>
<div class="tx" style="left:61px;top:373.28px;font-size:12px;color:#222;font-weight:normal;letter-spacing:0.1px">HEVC MKV</div>
<div style="position:absolute;left:19px;top:415.3px;"><svg width="34" height="32" viewBox="0 0 34 32" style="display:block"><rect x="3.6" y="0.6" width="26.8" height="30" fill="#111"/><rect x="9.2" y="1.6" width="15.6" height="28" fill="#2aa3ea"/><path d="M12 9 L22 1.6 L24.8 1.6 L24.8 4 L15 9 Z" fill="#7cd0fa" opacity=".45"/><rect x="5.2" y="22.3" width="3" height="2.7" fill="#fff"/><rect x="25.8" y="22.3" width="3" height="2.7" fill="#fff"/><rect x="5.2" y="26.2" width="3" height="2.7" fill="#fff"/><rect x="25.8" y="26.2" width="3" height="2.7" fill="#fff"/><rect x="3.5" y="0" width="27" height="9.5" fill="#111"/><text x="17" y="8" text-anchor="middle" font-family="Liberation Sans" font-weight="bold" font-size="8.2" fill="#fff" stroke="#fff" stroke-width="0.25" textLength="22" lengthAdjust="spacingAndGlyphs">HEVC</text><rect x="0.6" y="9.8" width="32.8" height="11" rx="2.6" fill="#3f82d8" stroke="#2a5ca6" stroke-width="1"/><rect x="1.4" y="10.5" width="31.2" height="3" rx="1.2" fill="#6aa6ea" opacity=".5"/><rect x="6.3" y="11.3" width="21.4" height="8" rx="1.6" fill="#0d1a2a"/><text x="17" y="18.6" text-anchor="middle" font-family="Liberation Sans" font-weight="bold" font-size="9.4" fill="#fff" stroke="#fff" stroke-width="0.35" textLength="18.5" lengthAdjust="spacingAndGlyphs">MP4</text></svg></div>
<div class="selrow" style="left:246px;top:39px;width:479px;height:44px"></div>
<div style="position:absolute;left:693px;top:53.5px;"><svg width="15" height="15" viewBox="0 0 15 15" style="display:block"><path d="M6.34 0.29 L8.66 0.29 L10.00 3.17 L13.16 2.89 L14.32 4.90 L12.50 7.50 L14.32 10.10 L13.16 12.11 L10.00 11.83 L8.66 14.71 L6.34 14.71 L5.00 11.83 L1.84 12.11 L0.68 10.10 L2.50 7.50 L0.68 4.90 L1.84 2.89 L5.00 3.17 Z" fill="#1e1e1e" stroke="#1e1e1e" stroke-width="0.8" stroke-linejoin="round"/><circle cx="7.5" cy="7.5" r="2.6" fill="#dddddd"/></svg></div>
<div class="rtrack" style="left:729px;top:35px;height:383px"></div>
<div class="thumbbar" style="left:733px;top:38px;height:225px;width:7px"></div>
<div style="position:absolute;left:262px;top:45.0px;"><svg width="34" height="32" viewBox="0 0 34 32" style="display:block"><rect x="3.6" y="0.6" width="26.8" height="30" fill="#111"/><rect x="9.2" y="1.6" width="15.6" height="28" fill="#2aa3ea"/><path d="M12 9 L22 1.6 L24.8 1.6 L24.8 4 L15 9 Z" fill="#7cd0fa" opacity=".45"/><rect x="5.2" y="2.3" width="3" height="2.7" fill="#fff"/><rect x="25.8" y="2.3" width="3" height="2.7" fill="#fff"/><rect x="5.2" y="6.2" width="3" height="2.7" fill="#fff"/><rect x="25.8" y="6.2" width="3" height="2.7" fill="#fff"/><rect x="5.2" y="22.3" width="3" height="2.7" fill="#fff"/><rect x="25.8" y="22.3" width="3" height="2.7" fill="#fff"/><rect x="5.2" y="26.2" width="3" height="2.7" fill="#fff"/><rect x="25.8" y="26.2" width="3" height="2.7" fill="#fff"/><rect x="0.6" y="9.8" width="32.8" height="11" rx="2.6" fill="#3f82d8" stroke="#2a5ca6" stroke-width="1"/><rect x="1.4" y="10.5" width="31.2" height="3" rx="1.2" fill="#6aa6ea" opacity=".5"/><rect x="6.3" y="11.3" width="21.4" height="8" rx="1.6" fill="#0d1a2a"/><text x="17" y="18.6" text-anchor="middle" font-family="Liberation Sans" font-weight="bold" font-size="9.4" fill="#fff" stroke="#fff" stroke-width="0.35" textLength="18.5" lengthAdjust="spacingAndGlyphs">MP4</text></svg></div>
<div class="tx" style="left:303px;top:56.08px;font-size:12px;color:#222;font-weight:normal;letter-spacing:0.25px">Same as source</div>
<div class="tx" style="left:507px;top:56.08px;font-size:12px;color:#222;font-weight:normal;letter-spacing:0.55px">Auto</div>
<div style="position:absolute;left:262px;top:97.9px;"><svg width="34" height="32" viewBox="0 0 34 32" style="display:block"><rect x="3.6" y="0.6" width="26.8" height="30" fill="#111"/><rect x="9.2" y="1.6" width="15.6" height="28" fill="#2aa3ea"/><path d="M12 9 L22 1.6 L24.8 1.6 L24.8 4 L15 9 Z" fill="#7cd0fa" opacity=".45"/><rect x="5.2" y="2.3" width="3" height="2.7" fill="#fff"/><rect x="25.8" y="2.3" width="3" height="2.7" fill="#fff"/><rect x="5.2" y="6.2" width="3" height="2.7" fill="#fff"/><rect x="25.8" y="6.2" width="3" height="2.7" fill="#fff"/><rect x="5.2" y="22.3" width="3" height="2.7" fill="#fff"/><rect x="25.8" y="22.3" width="3" height="2.7" fill="#fff"/><rect x="5.2" y="26.2" width="3" height="2.7" fill="#fff"/><rect x="25.8" y="26.2" width="3" height="2.7" fill="#fff"/><rect x="0.6" y="9.8" width="32.8" height="11" rx="2.6" fill="#3f82d8" stroke="#2a5ca6" stroke-width="1"/><rect x="1.4" y="10.5" width="31.2" height="3" rx="1.2" fill="#6aa6ea" opacity=".5"/><rect x="6.3" y="11.3" width="21.4" height="8" rx="1.6" fill="#0d1a2a"/><text x="17" y="18.6" text-anchor="middle" font-family="Liberation Sans" font-weight="bold" font-size="9.4" fill="#fff" stroke="#fff" stroke-width="0.35" textLength="18.5" lengthAdjust="spacingAndGlyphs">MP4</text></svg></div>
<div class="tx" style="left:303px;top:108.98px;font-size:12px;color:#222;font-weight:normal;letter-spacing:0.25px">4K Video</div>
<div class="tx" style="left:507px;top:108.98px;font-size:12px;color:#222;font-weight:normal;letter-spacing:0.55px">3840*2160</div>
<div style="position:absolute;left:262px;top:150.8px;"><svg width="34" height="32" viewBox="0 0 34 32" style="display:block"><rect x="3.6" y="0.6" width="26.8" height="30" fill="#111"/><rect x="9.2" y="1.6" width="15.6" height="28" fill="#2aa3ea"/><path d="M12 9 L22 1.6 L24.8 1.6 L24.8 4 L15 9 Z" fill="#7cd0fa" opacity=".45"/><rect x="5.2" y="2.3" width="3" height="2.7" fill="#fff"/><rect x="25.8" y="2.3" width="3" height="2.7" fill="#fff"/><rect x="5.2" y="6.2" width="3" height="2.7" fill="#fff"/><rect x="25.8" y="6.2" width="3" height="2.7" fill="#fff"/><rect x="5.2" y="22.3" width="3" height="2.7" fill="#fff"/><rect x="25.8" y="22.3" width="3" height="2.7" fill="#fff"/><rect x="5.2" y="26.2" width="3" height="2.7" fill="#fff"/><rect x="25.8" y="26.2" width="3" height="2.7" fill="#fff"/><rect x="0.6" y="9.8" width="32.8" height="11" rx="2.6" fill="#3f82d8" stroke="#2a5ca6" stroke-width="1"/><rect x="1.4" y="10.5" width="31.2" height="3" rx="1.2" fill="#6aa6ea" opacity=".5"/><rect x="6.3" y="11.3" width="21.4" height="8" rx="1.6" fill="#0d1a2a"/><text x="17" y="18.6" text-anchor="middle" font-family="Liberation Sans" font-weight="bold" font-size="9.4" fill="#fff" stroke="#fff" stroke-width="0.35" textLength="18.5" lengthAdjust="spacingAndGlyphs">MP4</text></svg></div>
<div class="tx" style="left:303px;top:161.88px;font-size:12px;color:#222;font-weight:normal;letter-spacing:0.25px">8K Video</div>
<div class="tx" style="left:507px;top:161.88px;font-size:12px;color:#222;font-weight:normal;letter-spacing:0.55px">7680*4320</div>
<div style="position:absolute;left:262px;top:203.7px;"><svg width="34" height="32" viewBox="0 0 34 32" style="display:block"><rect x="3.6" y="0.6" width="26.8" height="30" fill="#111"/><rect x="9.2" y="1.6" width="15.6" height="28" fill="#2aa3ea"/><path d="M12 9 L22 1.6 L24.8 1.6 L24.8 4 L15 9 Z" fill="#7cd0fa" opacity=".45"/><rect x="5.2" y="2.3" width="3" height="2.7" fill="#fff"/><rect x="25.8" y="2.3" width="3" height="2.7" fill="#fff"/><rect x="5.2" y="6.2" width="3" height="2.7" fill="#fff"/><rect x="25.8" y="6.2" width="3" height="2.7" fill="#fff"/><rect x="5.2" y="22.3" width="3" height="2.7" fill="#fff"/><rect x="25.8" y="22.3" width="3" height="2.7" fill="#fff"/><rect x="5.2" y="26.2" width="3" height="2.7" fill="#fff"/><rect x="25.8" y="26.2" width="3" height="2.7" fill="#fff"/><rect x="0.6" y="9.8" width="32.8" height="11" rx="2.6" fill="#3f82d8" stroke="#2a5ca6" stroke-width="1"/><rect x="1.4" y="10.5" width="31.2" height="3" rx="1.2" fill="#6aa6ea" opacity=".5"/><rect x="6.3" y="11.3" width="21.4" height="8" rx="1.6" fill="#0d1a2a"/><text x="17" y="18.6" text-anchor="middle" font-family="Liberation Sans" font-weight="bold" font-size="9.4" fill="#fff" stroke="#fff" stroke-width="0.35" textLength="18.5" lengthAdjust="spacingAndGlyphs">MP4</text></svg></div>
<div class="tx" style="left:303px;top:214.78px;font-size:12px;color:#222;font-weight:normal;letter-spacing:0.25px">HD 1440p</div>
<div class="tx" style="left:507px;top:214.78px;font-size:12px;color:#222;font-weight:normal;letter-spacing:0.55px">1920*1440</div>
<div style="position:absolute;left:262px;top:256.6px;"><svg width="34" height="32" viewBox="0 0 34 32" style="display:block"><rect x="3.6" y="0.6" width="26.8" height="30" fill="#111"/><rect x="9.2" y="1.6" width="15.6" height="28" fill="#2aa3ea"/><path d="M12 9 L22 1.6 L24.8 1.6 L24.8 4 L15 9 Z" fill="#7cd0fa" opacity=".45"/><rect x="5.2" y="2.3" width="3" height="2.7" fill="#fff"/><rect x="25.8" y="2.3" width="3" height="2.7" fill="#fff"/><rect x="5.2" y="6.2" width="3" height="2.7" fill="#fff"/><rect x="25.8" y="6.2" width="3" height="2.7" fill="#fff"/><rect x="5.2" y="22.3" width="3" height="2.7" fill="#fff"/><rect x="25.8" y="22.3" width="3" height="2.7" fill="#fff"/><rect x="5.2" y="26.2" width="3" height="2.7" fill="#fff"/><rect x="25.8" y="26.2" width="3" height="2.7" fill="#fff"/><rect x="0.6" y="9.8" width="32.8" height="11" rx="2.6" fill="#3f82d8" stroke="#2a5ca6" stroke-width="1"/><rect x="1.4" y="10.5" width="31.2" height="3" rx="1.2" fill="#6aa6ea" opacity=".5"/><rect x="6.3" y="11.3" width="21.4" height="8" rx="1.6" fill="#0d1a2a"/><text x="17" y="18.6" text-anchor="middle" font-family="Liberation Sans" font-weight="bold" font-size="9.4" fill="#fff" stroke="#fff" stroke-width="0.35" textLength="18.5" lengthAdjust="spacingAndGlyphs">MP4</text></svg></div>
<div class="tx" style="left:303px;top:267.68px;font-size:12px;color:#222;font-weight:normal;letter-spacing:0.25px">HD 1080p</div>
<div class="tx" style="left:507px;top:267.68px;font-size:12px;color:#222;font-weight:normal;letter-spacing:0.55px">1920*1080</div>
<div style="position:absolute;left:262px;top:309.5px;"><svg width="34" height="32" viewBox="0 0 34 32" style="display:block"><rect x="3.6" y="0.6" width="26.8" height="30" fill="#111"/><rect x="9.2" y="1.6" width="15.6" height="28" fill="#2aa3ea"/><path d="M12 9 L22 1.6 L24.8 1.6 L24.8 4 L15 9 Z" fill="#7cd0fa" opacity=".45"/><rect x="5.2" y="2.3" width="3" height="2.7" fill="#fff"/><rect x="25.8" y="2.3" width="3" height="2.7" fill="#fff"/><rect x="5.2" y="6.2" width="3" height="2.7" fill="#fff"/><rect x="25.8" y="6.2" width="3" height="2.7" fill="#fff"/><rect x="5.2" y="22.3" width="3" height="2.7" fill="#fff"/><rect x="25.8" y="22.3" width="3" height="2.7" fill="#fff"/><rect x="5.2" y="26.2" width="3" height="2.7" fill="#fff"/><rect x="25.8" y="26.2" width="3" height="2.7" fill="#fff"/><rect x="0.6" y="9.8" width="32.8" height="11" rx="2.6" fill="#3f82d8" stroke="#2a5ca6" stroke-width="1"/><rect x="1.4" y="10.5" width="31.2" height="3" rx="1.2" fill="#6aa6ea" opacity=".5"/><rect x="6.3" y="11.3" width="21.4" height="8" rx="1.6" fill="#0d1a2a"/><text x="17" y="18.6" text-anchor="middle" font-family="Liberation Sans" font-weight="bold" font-size="9.4" fill="#fff" stroke="#fff" stroke-width="0.35" textLength="18.5" lengthAdjust="spacingAndGlyphs">MP4</text></svg></div>
<div class="tx" style="left:303px;top:320.58px;font-size:12px;color:#222;font-weight:normal;letter-spacing:0.25px">HD 960p</div>
<div class="tx" style="left:507px;top:320.58px;font-size:12px;color:#222;font-weight:normal;letter-spacing:0.55px">1280*960</div>
<div style="position:absolute;left:262px;top:362.4px;"><svg width="34" height="32" viewBox="0 0 34 32" style="display:block"><rect x="3.6" y="0.6" width="26.8" height="30" fill="#111"/><rect x="9.2" y="1.6" width="15.6" height="28" fill="#2aa3ea"/><path d="M12 9 L22 1.6 L24.8 1.6 L24.8 4 L15 9 Z" fill="#7cd0fa" opacity=".45"/><rect x="5.2" y="2.3" width="3" height="2.7" fill="#fff"/><rect x="25.8" y="2.3" width="3" height="2.7" fill="#fff"/><rect x="5.2" y="6.2" width="3" height="2.7" fill="#fff"/><rect x="25.8" y="6.2" width="3" height="2.7" fill="#fff"/><rect x="5.2" y="22.3" width="3" height="2.7" fill="#fff"/><rect x="25.8" y="22.3" width="3" height="2.7" fill="#fff"/><rect x="5.2" y="26.2" width="3" height="2.7" fill="#fff"/><rect x="25.8" y="26.2" width="3" height="2.7" fill="#fff"/><rect x="0.6" y="9.8" width="32.8" height="11" rx="2.6" fill="#3f82d8" stroke="#2a5ca6" stroke-width="1"/><rect x="1.4" y="10.5" width="31.2" height="3" rx="1.2" fill="#6aa6ea" opacity=".5"/><rect x="6.3" y="11.3" width="21.4" height="8" rx="1.6" fill="#0d1a2a"/><text x="17" y="18.6" text-anchor="middle" font-family="Liberation Sans" font-weight="bold" font-size="9.4" fill="#fff" stroke="#fff" stroke-width="0.35" textLength="18.5" lengthAdjust="spacingAndGlyphs">MP4</text></svg></div>
<div class="tx" style="left:303px;top:373.48px;font-size:12px;color:#222;font-weight:normal;letter-spacing:0.25px">HD 720p</div>
<div class="tx" style="left:507px;top:373.48px;font-size:12px;color:#222;font-weight:normal;letter-spacing:0.55px">1280*720</div>
<div style="position:absolute;left:262px;top:415.3px;"><svg width="34" height="32" viewBox="0 0 34 32" style="display:block"><rect x="3.6" y="0.6" width="26.8" height="30" fill="#111"/><rect x="9.2" y="1.6" width="15.6" height="28" fill="#2aa3ea"/><path d="M12 9 L22 1.6 L24.8 1.6 L24.8 4 L15 9 Z" fill="#7cd0fa" opacity=".45"/><rect x="5.2" y="22.3" width="3" height="2.7" fill="#fff"/><rect x="25.8" y="22.3" width="3" height="2.7" fill="#fff"/><rect x="5.2" y="26.2" width="3" height="2.7" fill="#fff"/><rect x="25.8" y="26.2" width="3" height="2.7" fill="#fff"/><rect x="3.5" y="0" width="27" height="9.5" fill="#111"/><text x="17" y="8" text-anchor="middle" font-family="Liberation Sans" font-weight="bold" font-size="8.2" fill="#fff" stroke="#fff" stroke-width="0.25" textLength="22" lengthAdjust="spacingAndGlyphs">HEVC</text><rect x="0.6" y="9.8" width="32.8" height="11" rx="2.6" fill="#3f82d8" stroke="#2a5ca6" stroke-width="1"/><rect x="1.4" y="10.5" width="31.2" height="3" rx="1.2" fill="#6aa6ea" opacity=".5"/><rect x="6.3" y="11.3" width="21.4" height="8" rx="1.6" fill="#0d1a2a"/><text x="17" y="18.6" text-anchor="middle" font-family="Liberation Sans" font-weight="bold" font-size="9.4" fill="#fff" stroke="#fff" stroke-width="0.35" textLength="18.5" lengthAdjust="spacingAndGlyphs">MP4</text></svg></div>
</div>
<div class="title">
  <div class="dot" style="left:7px"></div>
  <div class="dot" style="left:25px"></div>
  <div class="dot" style="left:44px"></div>
  <div class="tx" style="left:0;width:1000px;top:6.5px;text-align:center;color:#fff;font-size:13.5px;font-weight:normal;-webkit-text-stroke:0.45px #fff;letter-spacing:0.1px">Video Converter</div>
  <div style="position:absolute;left:197px;top:26px;width:803px;height:1px;background:#1e1e1e"></div>
  <svg width="22" height="20" viewBox="0 0 22 20" style="position:absolute;left:964px;top:4px"><path d="M2 10 L11 2 L20 10" fill="none" stroke="#fff" stroke-width="2.2" stroke-linecap="round" stroke-linejoin="round"/><path d="M5 9.5 L11 4.5 L17 9.5 V18 H12.6 V13.5 H9.4 V18 H5 Z" fill="#fff"/></svg>
</div>
<div class="bottom">
<div style="position:absolute;left:11px;top:8px;"><svg width="20" height="21" viewBox="0 0 20 21" style="display:block"><rect x="0.8" y="0.8" width="18.4" height="19.4" rx="2" fill="none" stroke="#c8c8c8" stroke-width="1.5"/><path d="M10 4.5 V16.5 M4.5 10.5 H15.5" stroke="#c8c8c8" stroke-width="1.4"/></svg></div>
<div style="position:absolute;left:40px;top:8px;"><svg width="19" height="20" viewBox="0 0 19 20" style="display:block"><path d="M6.5 3 Q6.5 0.8 9.5 0.8 Q12.5 0.8 12.5 3" fill="none" stroke="#c8c8c8" stroke-width="1.4"/><path d="M0.5 3.5 H18.5" stroke="#c8c8c8" stroke-width="1.6"/><path d="M2.2 3.8 V17.5 Q2.2 19.2 4 19.2 H15 Q16.8 19.2 16.8 17.5 V3.8" fill="none" stroke="#c8c8c8" stroke-width="1.4"/><path d="M7 7 V15.5 M9.5 7 V15.5 M12 7 V15.5" stroke="#c8c8c8" stroke-width="1.3"/></svg></div>
<div class="tx" style="left:106.5px;top:11.26px;font-size:13px;color:#f4f4f4;font-weight:normal;-webkit-text-stroke:0.25px #fff">Convert to</div>
<div class="dd" style="left:168px;top:9px;width:175px;height:18px"></div>
<div class="tx" style="left:174px;top:11.72px;font-size:12.5px;color:#fff;font-weight:normal;-webkit-text-stroke:0.25px #fff">MP4 Same as source</div>
<div style="position:absolute;left:330.5px;top:11px;"><svg width="8" height="14" viewBox="0 0 8 14" style="display:block"><path d="M1.2 6 L4 1.5 L6.8 6 Z M1.2 7.8 L4 12.3 L6.8 7.8 Z" fill="#fff"/></svg></div>
<div style="position:absolute;left:347px;top:10.399999999999977px;"><svg width="15" height="15" viewBox="0 0 15 15" style="display:block"><path d="M6.67 0.65 L8.33 0.65 L9.38 2.97 L11.76 2.07 L12.93 3.24 L12.03 5.62 L14.35 6.67 L14.35 8.33 L12.03 9.38 L12.93 11.76 L11.76 12.93 L9.38 12.03 L8.33 14.35 L6.67 14.35 L5.62 12.03 L3.24 12.93 L2.07 11.76 L2.97 9.38 L0.65 8.33 L0.65 6.67 L2.97 5.62 L2.07 3.24 L3.24 2.07 L5.62 2.97 Z" fill="#d4d4d4" stroke="#d4d4d4" stroke-width="0.8" stroke-linejoin="round"/><circle cx="7.5" cy="7.5" r="2.3" fill="#050505"/></svg></div>
<div class="tx" style="left:419.5px;top:11.72px;font-size:12.5px;color:#f4f4f4;font-weight:normal;-webkit-text-stroke:0.25px #fff">Save to</div>
<div class="dd" style="left:465.5px;top:8.5px;width:259.5px;height:19.5px;border:1.5px solid #9a9a9a;border-radius:5px;background:#050505"></div>
<div style="position:absolute;left:469px;top:13px;"><svg width="15" height="12" viewBox="0 0 15 12" style="display:block"><path d="M0.5 1.5 Q0.5 0.5 1.5 0.5 H5.5 L7 2 H13.5 Q14.5 2 14.5 3 V10.5 Q14.5 11.5 13.5 11.5 H1.5 Q0.5 11.5 0.5 10.5 Z" fill="#b8b8b8"/><path d="M0.5 4 H14.5" stroke="#7a7a7a" stroke-width=".9"/></svg></div>
<div class="tx" style="left:488px;top:11.72px;font-size:12.5px;color:#fff;font-weight:normal;-webkit-text-stroke:0.25px #fff">/Users/test/Movies/...ideoPaw/Converted</div>
<div style="position:absolute;left:730px;top:10.799999999999955px;"><svg width="15" height="15" viewBox="0 0 15 15" style="display:block"><circle cx="7.5" cy="7.5" r="7.2" fill="#a8a8a8"/><path d="M3.8 7.5 H10.8 M8 4.8 L10.8 7.5 L8 10.2" fill="none" stroke="#1a1a1a" stroke-width="1.4" stroke-linecap="round" stroke-linejoin="round"/></svg></div>
<div class="chk" style="left:842px;top:11px"></div>
<div class="tx" style="left:860px;top:11.26px;font-size:13px;color:#f4f4f4;font-weight:normal;-webkit-text-stroke:0.25px #fff">Merge</div>
<div class="conv" style="left:900px;top:5px"></div>
<div class="tx" style="left:900px;top:11.46px;font-size:13px;color:#f2eaff;font-weight:normal;width:89px;text-align:center;-webkit-text-stroke:0.2px #f2eaff">Convert</div>
</div>
</div>
</body></html>
